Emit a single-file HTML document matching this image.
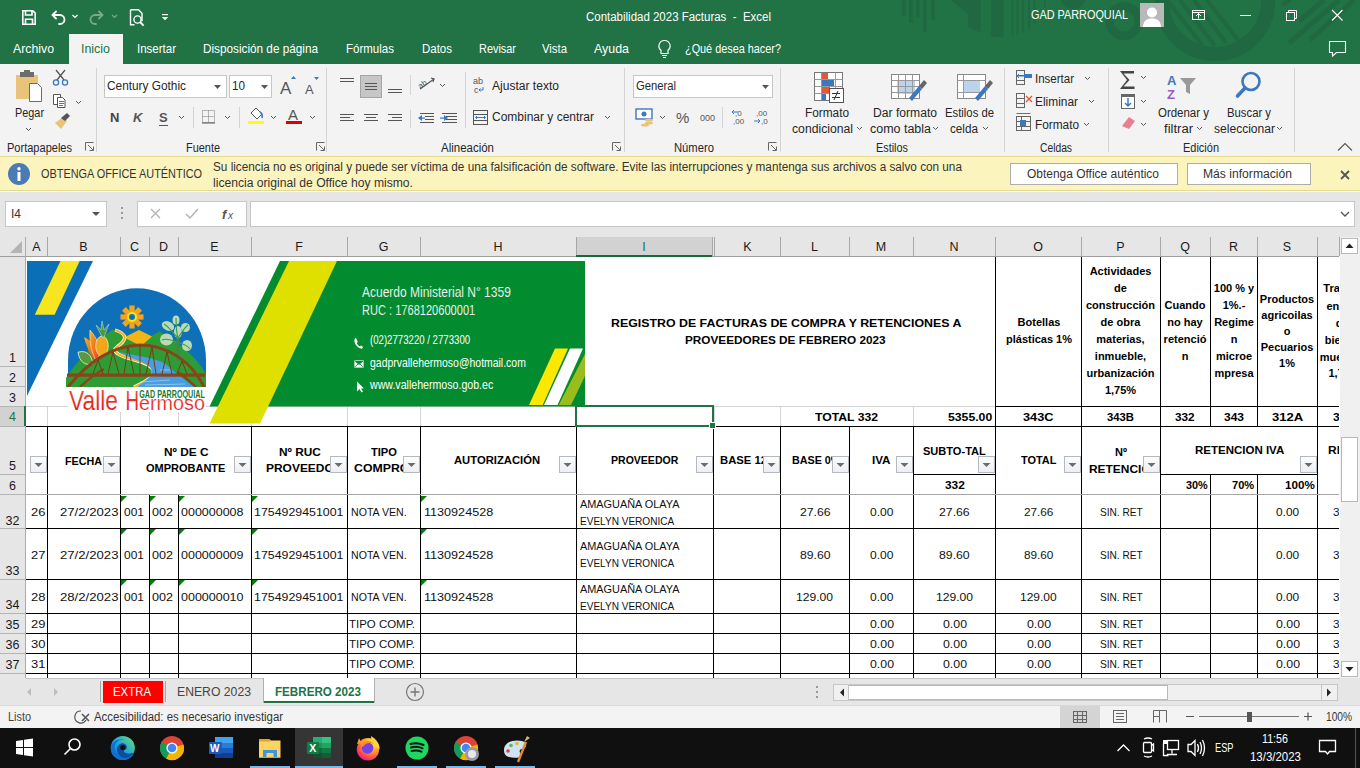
<!DOCTYPE html><html><head><meta charset="utf-8"><style>
html,body{margin:0;padding:0;width:1360px;height:768px;overflow:hidden;background:#fff}
body{position:relative;font-family:"Liberation Sans",sans-serif}
.t{position:absolute;white-space:pre;transform-origin:0 0}
.r{position:absolute}
.s{position:absolute;overflow:visible}
svg text{font-family:"Liberation Sans",sans-serif}
</style></head><body>
<div class="r" style="left:0px;top:0px;width:1360px;height:64px;background:#217346;"></div>
<svg class="s" style="left:880px;top:0px;" width="480" height="64" viewBox="0 0 480 64">
<g fill="#1f6841">
<rect x="22" y="0" width="3.6" height="16"/><rect x="29" y="0" width="3.6" height="23"/><rect x="36" y="0" width="3.6" height="17"/><rect x="43" y="0" width="3.8" height="32"/><rect x="51" y="0" width="3.8" height="20"/>
<path d="M70.6 0 L100.6 0 L100.6 32.6 L88 27 L88 14z"/>
<path d="M111 0 h12.5 v37 h-12.5z"/>
<rect x="131.5" y="0" width="1.8" height="35.5"/><rect x="136.5" y="0" width="1.8" height="34.5"/><rect x="142" y="0" width="1.8" height="32.6"/><rect x="148" y="0" width="1.8" height="29"/><rect x="153.5" y="0" width="1.8" height="24.7"/><rect x="164" y="0" width="1.8" height="7"/>
<ellipse cx="193" cy="-4" rx="13" ry="13"/>
</g>
<circle cx="244" cy="21" r="14.7" fill="none" stroke="#1f6841" stroke-width="8.5"/>
<circle cx="335" cy="1" r="53" fill="none" stroke="#1f6841" stroke-width="14"/>
<g stroke="#1f6841" stroke-width="4">
<path d="M287 0 L323 46"/><path d="M300 0 L335 46"/><path d="M314 0 L346 43"/><path d="M327 0 L358 40"/>
</g>
<g stroke="#1f6841" stroke-width="5">
<path d="M409 43 L459 0"/><path d="M430 40 L474 0"/><path d="M403 5 L410 -1"/><path d="M419 21 L444 0"/>
</g>
</svg>
<svg class="s" style="left:20px;top:6px;" width="160" height="24" viewBox="0 0 160 24">
<g fill="none" stroke="#fff" stroke-width="1.6">
<path d="M2.8 4.8 h10 l2.4 2.4 v11 h-12.4z"/>
<path d="M5.5 4.8 v4.2 h6.5 v-4.2"/><path d="M5.5 18.2 v-5 h7 v5"/>
</g>
<g fill="none" stroke="#fff" stroke-width="1.8" stroke-linecap="round">
<path d="M33 9 h7 a4.5 4.5 0 0 1 0 9 h-1"/><path d="M36 5.5 l-3.5 3.5 3.5 3.5"/>
</g>
<path d="M52.5 9 l2.5 2.5 2.5-2.5" fill="none" stroke="#fff" stroke-width="1.2"/>
<g fill="none" stroke="#79a98c" stroke-width="1.8" stroke-linecap="round">
<path d="M82 9 h-7 a4.5 4.5 0 0 0 0 9 h1"/><path d="M79 5.5 l3.5 3.5 -3.5 3.5"/>
</g>
<path d="M92 9 l2.5 2.5 2.5-2.5" fill="none" stroke="#79a98c" stroke-width="1.2"/>
<g fill="none" stroke="#fff" stroke-width="1.4">
<path d="M110.5 3.8 h8 l3.5 3.5 v8"/><path d="M110.5 3.8 v15 h4"/>
<circle cx="117.5" cy="13.5" r="3.6"/><path d="M120 16 l3.6 3.6" stroke-width="2"/>
</g>
<g fill="#fff"><rect x="142" y="8" width="6" height="1.2"/><path d="M141.8 11 h6.4 l-3.2 3.2z"/></g>
</svg>
<div class="t" style="left:586.00px;top:9.11px;font-size:12.5px;line-height:16px;color:#fff;font-weight:400;transform:scaleX(0.9181);">Contabilidad 2023 Facturas  -  Excel</div>
<div class="t" style="left:1031.00px;top:8.10px;font-size:12px;line-height:15px;color:#fff;font-weight:400;transform:scaleX(0.9054);">GAD PARROQUIAL</div>
<svg class="s" style="left:1140px;top:3px;" width="24" height="24" viewBox="0 0 24 24"><rect width="24" height="24" fill="#b9b9b9"/><circle cx="12" cy="9.5" r="5" fill="#fff"/><path d="M3 24 c0-6 4-8.5 9-8.5 s9 2.5 9 8.5z" fill="#fff"/></svg>
<svg class="s" style="left:1188px;top:6px;" width="160" height="22" viewBox="0 0 160 22">
<g fill="none" stroke="#fff" stroke-width="1">
<rect x="4.5" y="4.5" width="12" height="9"/><path d="M4.5 6.5 h12"/><path d="M10.5 12.5 v-5 M8 10 l2.5-2.5 2.5 2.5"/>
<path d="M52 9.5 h11"/>
<rect x="98.5" y="6.5" width="8" height="8"/><path d="M100.5 6.5 v-2 h8 v8 h-2"/>
<path d="M144 4 l10.5 10.5 M154.5 4 l-10.5 10.5" stroke-width="1.1"/>
</g></svg>
<div class="r" style="left:69px;top:34px;width:54px;height:30px;background:#f3f3f3;"></div>
<div class="t" style="left:13.00px;top:41.11px;font-size:13px;line-height:16px;color:#fff;font-weight:400;transform:scaleX(0.9457);">Archivo</div>
<div class="t" style="left:81.00px;top:41.11px;font-size:13px;line-height:16px;color:#217346;font-weight:400;transform:scaleX(0.9554);">Inicio</div>
<div class="t" style="left:137.00px;top:41.11px;font-size:13px;line-height:16px;color:#fff;font-weight:400;transform:scaleX(0.8850);">Insertar</div>
<div class="t" style="left:203.00px;top:41.11px;font-size:13px;line-height:16px;color:#fff;font-weight:400;transform:scaleX(0.9041);">Disposición de página</div>
<div class="t" style="left:346.00px;top:41.11px;font-size:13px;line-height:16px;color:#fff;font-weight:400;transform:scaleX(0.8860);">Fórmulas</div>
<div class="t" style="left:422.00px;top:41.11px;font-size:13px;line-height:16px;color:#fff;font-weight:400;transform:scaleX(0.8833);">Datos</div>
<div class="t" style="left:479.00px;top:41.11px;font-size:13px;line-height:16px;color:#fff;font-weight:400;transform:scaleX(0.8396);">Revisar</div>
<div class="t" style="left:542.00px;top:41.11px;font-size:13px;line-height:16px;color:#fff;font-weight:400;transform:scaleX(0.8712);">Vista</div>
<div class="t" style="left:594.00px;top:41.11px;font-size:13px;line-height:16px;color:#fff;font-weight:400;transform:scaleX(0.9547);">Ayuda</div>
<div class="t" style="left:685.00px;top:41.11px;font-size:13px;line-height:16px;color:#fff;font-weight:400;transform:scaleX(0.8354);">¿Qué desea hacer?</div>
<svg class="s" style="left:655px;top:38px;" width="20" height="22" viewBox="0 0 20 22"><g fill="none" stroke="#fff" stroke-width="1.2"><path d="M9.5 2.5 a5.5 5.5 0 0 1 3.5 9.8 v3.2 h-7 v-3.2 a5.5 5.5 0 0 1 3.5-9.8z"/><path d="M7 17.5 h5 M8 19.5 h3"/></g></svg>
<svg class="s" style="left:1326px;top:38px;" width="24" height="20" viewBox="0 0 24 20"><path d="M3.5 3.5 h16 v11 h-9 l-4 3.5 v-3.5 h-3z" fill="none" stroke="#fff" stroke-width="1.1"/></svg>
<div class="r" style="left:0px;top:64px;width:1360px;height:93px;background:#f3f3f3;"></div>
<div class="r" style="left:96px;top:68px;width:1px;height:84px;background:#d4d4d4;"></div>
<div class="r" style="left:326px;top:68px;width:1px;height:84px;background:#d4d4d4;"></div>
<div class="r" style="left:624px;top:68px;width:1px;height:84px;background:#d4d4d4;"></div>
<div class="r" style="left:780px;top:68px;width:1px;height:84px;background:#d4d4d4;"></div>
<div class="r" style="left:1004px;top:68px;width:1px;height:84px;background:#d4d4d4;"></div>
<div class="r" style="left:1108px;top:68px;width:1px;height:84px;background:#d4d4d4;"></div>
<div class="r" style="left:1294px;top:68px;width:1px;height:84px;background:#d4d4d4;"></div>
<div class="t" style="left:7.00px;top:140.90px;font-size:12px;line-height:15px;color:#262626;font-weight:400;transform:scaleX(0.9192);">Portapapeles</div>
<div class="t" style="left:186.00px;top:140.90px;font-size:12px;line-height:15px;color:#262626;font-weight:400;transform:scaleX(0.9103);">Fuente</div>
<div class="t" style="left:441.00px;top:140.90px;font-size:12px;line-height:15px;color:#262626;font-weight:400;transform:scaleX(0.9570);">Alineación</div>
<div class="t" style="left:674.00px;top:140.90px;font-size:12px;line-height:15px;color:#262626;font-weight:400;transform:scaleX(0.9370);">Número</div>
<div class="t" style="left:876.00px;top:140.90px;font-size:12px;line-height:15px;color:#262626;font-weight:400;transform:scaleX(0.9055);">Estilos</div>
<div class="t" style="left:1040.00px;top:140.90px;font-size:12px;line-height:15px;color:#262626;font-weight:400;transform:scaleX(0.8568);">Celdas</div>
<div class="t" style="left:1183.00px;top:140.90px;font-size:12px;line-height:15px;color:#262626;font-weight:400;transform:scaleX(0.9146);">Edición</div>
<svg class="s" style="left:85px;top:142px;" width="9" height="9" viewBox="0 0 9 9"><g fill="none" stroke="#666" stroke-width="1"><path d="M0.5 8.5 v-8 h8"/><path d="M3 3 l5 5 M8.5 4.5 v4 h-4"/></g></svg>
<svg class="s" style="left:316px;top:142px;" width="9" height="9" viewBox="0 0 9 9"><g fill="none" stroke="#666" stroke-width="1"><path d="M0.5 8.5 v-8 h8"/><path d="M3 3 l5 5 M8.5 4.5 v4 h-4"/></g></svg>
<svg class="s" style="left:612px;top:142px;" width="9" height="9" viewBox="0 0 9 9"><g fill="none" stroke="#666" stroke-width="1"><path d="M0.5 8.5 v-8 h8"/><path d="M3 3 l5 5 M8.5 4.5 v4 h-4"/></g></svg>
<svg class="s" style="left:768px;top:142px;" width="9" height="9" viewBox="0 0 9 9"><g fill="none" stroke="#666" stroke-width="1"><path d="M0.5 8.5 v-8 h8"/><path d="M3 3 l5 5 M8.5 4.5 v4 h-4"/></g></svg>
<svg class="s" style="left:1336px;top:141px;" width="18" height="12" viewBox="0 0 18 12"><path d="M2 9.5 l7-7 7 7" fill="none" stroke="#555" stroke-width="1.1"/></svg>
<svg class="s" style="left:10px;top:66px;" width="80" height="70" viewBox="0 0 80 70">
<path d="M6 9 h22 v24 h-22z" fill="#eac37b"/>
<rect x="10" y="6" width="14" height="5" fill="#6c6c6c"/><rect x="14" y="4" width="6" height="3" fill="#6c6c6c"/>
<path d="M19.5 17.5 h8 l4 4 v14 h-12z" fill="#fff" stroke="#6c6c6c" stroke-width="1"/>
<g fill="none" stroke="#3b78c1" stroke-width="1.3"><circle cx="46" cy="16.5" r="2.6"/><circle cx="55" cy="16.5" r="2.6"/></g>
<path d="M47 14 l8-10 M54 14 l-8-10" stroke="#555" stroke-width="1.3"/>
<g fill="#fff" stroke="#555" stroke-width="1"><path d="M43.5 28.5 h7 v10 h-7z"/><path d="M47.5 31.5 h5 l2.5 2.5 v7.5 h-7.5z"/></g>
<g stroke="#3b78c1"><path d="M49 35.5 h5 M49 37.5 h5 M49 39.5 h4"/></g>
<path d="M66 35 l2.5 2.5 2.5-2.5" fill="none" stroke="#555" stroke-width="1"/>
<path d="M45 57 l8-6 4 4 -6 8z" fill="#eac37b"/><path d="M51 52 l6-5 3 3 -5 5z" fill="#555"/>
<path d="M16 62 l2.5 2.5 2.5-2.5" fill="none" stroke="#555" stroke-width="1"/>
</svg>
<div class="t" style="left:14.50px;top:106.10px;font-size:12px;line-height:15px;color:#262626;font-weight:400;transform:scaleX(0.9060);">Pegar</div>
<div class="r" style="left:104px;top:75px;width:123px;height:23px;background:#fff;border:1px solid #c6c6c6;box-sizing:border-box"></div>
<div class="r" style="left:229px;top:75px;width:43px;height:23px;background:#fff;border:1px solid #c6c6c6;box-sizing:border-box"></div>
<div class="t" style="left:107.00px;top:79.10px;font-size:12px;line-height:15px;color:#262626;font-weight:400;transform:scaleX(0.9870);">Century Gothic</div>
<div class="t" style="left:232.00px;top:79.10px;font-size:12px;line-height:15px;color:#262626;font-weight:400;transform:scaleX(0.9738);">10</div>
<svg class="s" style="left:210px;top:82px;" width="60" height="10" viewBox="0 0 60 10"><path d="M4 3 h7 l-3.5 4z M51 3 h7 l-3.5 4z" fill="#555"/></svg>
<svg class="s" style="left:278px;top:74px;" width="44" height="24" viewBox="0 0 44 24">
<text x="2" y="20" font-family="Liberation Sans" font-size="17" fill="#555">A</text><path d="M13 5 h5 l-2.5-3z" fill="#3b78c1"/>
<text x="27" y="20" font-family="Liberation Sans" font-size="13" fill="#555">A</text><path d="M36 3 h5 l-2.5 3z" fill="#3b78c1"/>
</svg>
<svg class="s" style="left:104px;top:104px;" width="222" height="28" viewBox="0 0 222 28">
<text x="6" y="18" font-family="Liberation Sans" font-weight="700" font-size="13" fill="#444">N</text>
<text x="29" y="18" font-family="Liberation Sans" font-weight="700" font-style="italic" font-size="13" fill="#555">K</text>
<text x="55" y="18" font-family="Liberation Sans" font-weight="700" font-size="13" fill="#555">S</text><rect x="55" y="21" width="9" height="1" fill="#555"/>
<path d="M75 12 l2.5 2.5 2.5-2.5" fill="none" stroke="#555"/>
<rect x="89" y="3" width="1" height="21" fill="#d4d4d4"/>
<g fill="none" stroke="#777" stroke-width="1" stroke-dasharray="1 1"><rect x="98.5" y="6.5" width="12" height="12"/><path d="M104.5 6.5 v12 M98.5 12.5 h12"/></g><path d="M98 19 h13" stroke="#555"/>
<path d="M121 12 l2.5 2.5 2.5-2.5" fill="none" stroke="#555"/>
<rect x="135" y="3" width="1" height="21" fill="#d4d4d4"/>
<path d="M147 9 l5-5 6 6 -5 5z" fill="#fff" stroke="#555"/><path d="M156 8 q3 2 2 6" fill="none" stroke="#3b78c1" stroke-width="1.6"/>
<rect x="144" y="17" width="16" height="3" fill="#ffff00"/>
<path d="M167 12 l2.5 2.5 2.5-2.5" fill="none" stroke="#555"/>
<text x="184" y="16" font-family="Liberation Sans" font-size="15" fill="#555">A</text>
<rect x="182" y="17" width="16" height="3" fill="#e00000"/>
<path d="M206 12 l2.5 2.5 2.5-2.5" fill="none" stroke="#555"/>
</svg>
<div class="r" style="left:360px;top:75px;width:22px;height:23px;background:#c6c6c6;border:1px solid #a5a5a5;box-sizing:border-box"></div>
<svg class="s" style="left:336px;top:72px;" width="290" height="60" viewBox="0 0 290 60">
<g stroke="#555" stroke-width="1">
<path d="M4 6.5 h14 M4 9.5 h14"/>
<path d="M29 11.5 h12 M29 14.5 h12 M29 17.5 h12"/>
<path d="M52 17.5 h14 M52 20.5 h14"/>
<path d="M4 42.5 h14 M4 45.5 h10 M4 48.5 h14"/>
<path d="M28 42.5 h14 M30 45.5 h10 M28 48.5 h14"/>
<path d="M52 42.5 h14 M56 45.5 h10 M52 48.5 h14"/>
<path d="M84 41.5 h14 M89 44.5 h9 M89 47.5 h9 M84 50.5 h14"/>
<path d="M106 41.5 h15 M110 44.5 h11 M110 47.5 h11 M106 50.5 h15"/>
</g>
<g fill="#3b78c1"><path d="M82 46 l4-3 v6z"/><rect x="85" y="45.5" width="4" height="1.2"/><path d="M112 46 l-4-3 v6z"/><rect x="104" y="45.5" width="4" height="1.2"/></g>
<rect x="74" y="3" width="1" height="20" fill="#d4d4d4"/><rect x="74" y="38" width="1" height="18" fill="#d4d4d4"/>
<rect x="129" y="0" width="1" height="56" fill="#d4d4d4"/>
<g fill="none" stroke="#555" stroke-width="1.2"><path d="M84 17 l14-10"/><path d="M95 6 l3 1 -1 3"/></g>
<text x="82" y="14" font-family="Liberation Sans" font-size="8" fill="#555" transform="rotate(-35 88 12)">ab</text>
<path d="M104 12 l2.5 2.5 2.5-2.5" fill="none" stroke="#555"/>
<text x="137" y="12" font-family="Liberation Sans" font-size="9" fill="#555">ab</text><text x="138" y="21" font-family="Liberation Sans" font-size="9" fill="#555">c</text>
<path d="M147 15 v3 h-4 M144.5 16.5 l-1.5 1.5 1.5 1.5" fill="none" stroke="#3b78c1"/>
<g fill="none" stroke="#555"><rect x="137.5" y="38.5" width="14" height="14"/><path d="M137.5 42.5 h14 M137.5 48.5 h14"/></g>
<path d="M140 45.5 h9" stroke="#3b78c1"/><path d="M141 44 l-1.5 1.5 1.5 1.5 M148 44 l1.5 1.5 -1.5 1.5" fill="none" stroke="#3b78c1"/>
<path d="M269 44 l2.5 2.5 2.5-2.5" fill="none" stroke="#555"/>
</svg>
<div class="t" style="left:492.00px;top:79.10px;font-size:12px;line-height:15px;color:#262626;font-weight:400;transform:scaleX(1.0046);">Ajustar texto</div>
<div class="t" style="left:492.00px;top:110.10px;font-size:12px;line-height:15px;color:#262626;font-weight:400;transform:scaleX(0.9997);">Combinar y centrar</div>
<div class="r" style="left:633px;top:75px;width:140px;height:23px;background:#fff;border:1px solid #c6c6c6;box-sizing:border-box"></div>
<div class="t" style="left:636.00px;top:79.10px;font-size:12px;line-height:15px;color:#262626;font-weight:400;transform:scaleX(0.9370);">General</div>
<svg class="s" style="left:630px;top:104px;" width="150" height="28" viewBox="0 0 150 28">
<path d="M761 10" />

<rect x="6" y="5" width="16" height="10" fill="#fff" stroke="#3b78c1" stroke-width="1.4"/><circle cx="14" cy="10" r="2.5" fill="#3b78c1"/>
<g fill="#eac37b"><ellipse cx="19" cy="16" rx="4" ry="1.6"/><ellipse cx="19" cy="19" rx="4" ry="1.6"/><ellipse cx="15" cy="21" rx="4" ry="1.6"/></g>
<path d="M30 12 l2.5 2.5 2.5-2.5" fill="none" stroke="#555"/>
<text x="46" y="19" font-family="Liberation Sans" font-size="15" fill="#555">%</text>
<text x="70" y="17" font-family="Liberation Sans" font-size="9" fill="#555">000</text>
<rect x="92" y="3" width="1" height="21" fill="#d4d4d4"/>
<text x="105" y="12" font-family="Liberation Sans" font-size="8" fill="#555">,0</text><text x="103" y="20" font-family="Liberation Sans" font-size="8" fill="#555">,00</text>
<path d="M108 8 h-6 M104 6 l-2 2 2 2" fill="none" stroke="#3b78c1"/>
<text x="126" y="12" font-family="Liberation Sans" font-size="8" fill="#555">,00</text><text x="131" y="20" font-family="Liberation Sans" font-size="8" fill="#555">,0</text>
<path d="M124 17 h6 M128 15 l2 2 -2 2" fill="none" stroke="#3b78c1"/>
</svg>
<svg class="s" style="left:760px;top:82px;" width="12" height="10" viewBox="0 0 12 10"><path d="M2 3 h7 l-3.5 4z" fill="#555"/></svg>
<svg class="s" style="left:805px;top:68px;" width="200" height="40" viewBox="0 0 200 40">
<g fill="#fff" stroke="#777"><rect x="9.5" y="4.5" width="28" height="28"/></g>
<g stroke="#999"><path d="M9.5 11.5 h28 M9.5 18.5 h28 M9.5 25.5 h28 M16.5 4.5 v28 M30.5 4.5 v28"/></g>
<rect x="17" y="5" width="6" height="6" fill="#e05a38"/><rect x="17" y="12" width="12" height="6" fill="#3b78c1"/><rect x="17" y="19" width="8" height="6" fill="#e05a38"/><rect x="17" y="26" width="4" height="6" fill="#3b78c1"/>
<rect x="24.5" y="20.5" width="14" height="14" fill="#fff" stroke="#555"/><path d="M27 25.5 h8 M27 29.5 h8 M33 23 l-4 9" stroke="#333"/>
<g fill="#fff" stroke="#888"><rect x="86.5" y="6.5" width="28" height="24"/></g>
<rect x="92" y="12" width="18" height="14" fill="#bcd3ee"/>
<g stroke="#999"><path d="M86.5 12.5 h28 M86.5 18.5 h28 M86.5 24.5 h28 M93.5 6.5 v24 M100.5 6.5 v24 M107.5 6.5 v24"/></g>
<path d="M104 30 l10-12 3 3 -10 12z" fill="#3b78c1"/><path d="M114 18 l5-6 3 3 -5 6z" fill="#666"/>
<g fill="#fff" stroke="#888"><rect x="152.5" y="6.5" width="28" height="24"/></g>
<rect x="159" y="12" width="16" height="12" fill="#bcd3ee"/>
<g stroke="#999"><path d="M152.5 12.5 h28 M152.5 24.5 h28 M158.5 6.5 v24"/></g>
<path d="M170 30 l10-12 3 3 -10 12z" fill="#3b78c1"/><path d="M180 18 l5-6 3 3 -5 6z" fill="#666"/>
</svg>
<div class="t" style="left:805.00px;top:105.60px;font-size:12px;line-height:15px;color:#262626;font-weight:400;transform:scaleX(0.9850);">Formato</div>
<div class="t" style="left:792.00px;top:121.60px;font-size:12px;line-height:15px;color:#262626;font-weight:400;transform:scaleX(1.0162);">condicional</div>
<div class="t" style="left:873.00px;top:105.60px;font-size:12px;line-height:15px;color:#262626;font-weight:400;transform:scaleX(1.0101);">Dar formato</div>
<div class="t" style="left:870.00px;top:121.60px;font-size:12px;line-height:15px;color:#262626;font-weight:400;transform:scaleX(1.0390);">como tabla</div>
<div class="t" style="left:945.00px;top:105.60px;font-size:12px;line-height:15px;color:#262626;font-weight:400;transform:scaleX(0.9419);">Estilos de</div>
<div class="t" style="left:950.00px;top:121.60px;font-size:12px;line-height:15px;color:#262626;font-weight:400;transform:scaleX(0.9753);">celda</div>
<svg class="s" style="left:855px;top:126px;" width="140" height="6" viewBox="0 0 140 6"><path d="M2 1 l2.5 2.5 2.5-2.5 M78 1 l2.5 2.5 2.5-2.5 M128 1 l2.5 2.5 2.5-2.5" fill="none" stroke="#555"/></svg>
<svg class="s" style="left:1012px;top:66px;" width="90" height="68" viewBox="0 0 90 68">
<g fill="none" stroke="#666"><rect x="4.5" y="4.5" width="8" height="14"/><path d="M4.5 9.5 h8 M4.5 14.5 h8"/></g>
<rect x="12" y="8" width="8" height="4" fill="#3b78c1"/><path d="M6 10 h6 M7 8 l-2 2 2 2" fill="none" stroke="#3b78c1"/>
<g fill="none" stroke="#666"><rect x="4.5" y="27.5" width="8" height="14"/><path d="M4.5 32.5 h8 M4.5 37.5 h8"/></g>
<path d="M14 30 l6 6 M20 30 l-6 6" stroke="#e05a38" stroke-width="1.4"/>
<g fill="none" stroke="#666"><rect x="4.5" y="50.5" width="14" height="14"/><path d="M4.5 55.5 h14 M4.5 60.5 h14 M9.5 50.5 v14"/></g>
<rect x="8" y="54" width="6" height="6" fill="#3b78c1"/><path d="M4.5 47.5 h14" stroke="#3b78c1"/>
<path d="M73 11 l2.5 2.5 2.5-2.5 M77 34 l2.5 2.5 2.5-2.5 M72 57 l2.5 2.5 2.5-2.5" fill="none" stroke="#555"/>
</svg>
<div class="t" style="left:1035.00px;top:71.60px;font-size:12px;line-height:15px;color:#262626;font-weight:400;transform:scaleX(0.9587);">Insertar</div>
<div class="t" style="left:1035.00px;top:94.60px;font-size:12px;line-height:15px;color:#262626;font-weight:400;transform:scaleX(0.9919);">Eliminar</div>
<div class="t" style="left:1035.00px;top:117.60px;font-size:12px;line-height:15px;color:#262626;font-weight:400;transform:scaleX(0.9850);">Formato</div>
<svg class="s" style="left:1114px;top:66px;" width="180" height="70" viewBox="0 0 180 70">
<path d="M6 5 h14 v2.5 h-10.5 l6 6.5 -6 6.5 h11 v2.5 h-14.5 l7-9z" fill="#444"/>
<path d="M27 10 l2.5 2.5 2.5-2.5" fill="none" stroke="#555"/>
<rect x="7.5" y="28.5" width="13" height="14" fill="#fff" stroke="#666"/><rect x="7" y="28" width="14" height="3" fill="#666"/>
<path d="M14 32 v8 M11 37 l3 3 3-3" fill="none" stroke="#3b78c1" stroke-width="1.5"/>
<path d="M27 34 l2.5 2.5 2.5-2.5" fill="none" stroke="#555"/>
<path d="M8 60 l7-9 6 4 -6 8z" fill="#e8808f"/>
<path d="M27 57 l2.5 2.5 2.5-2.5" fill="none" stroke="#555"/>
<text x="53" y="19" font-family="Liberation Sans" font-weight="700" font-size="13" fill="#3b78c1">A</text><text x="53" y="33" font-family="Liberation Sans" font-weight="700" font-size="13" fill="#9a5cc6">Z</text>
<path d="M66 12 h16 l-6 7 v9 l-4-2 v-7z" fill="#999"/>
<circle cx="137" cy="15.5" r="8.5" fill="none" stroke="#3b78c1" stroke-width="2.6"/><path d="M131 22 l-7.5 8" stroke="#3b78c1" stroke-width="3.6" stroke-linecap="round"/>
</svg>
<div class="t" style="left:1158.00px;top:105.60px;font-size:12px;line-height:15px;color:#262626;font-weight:400;transform:scaleX(0.9556);">Ordenar y</div>
<div class="t" style="left:1164.00px;top:121.60px;font-size:12px;line-height:15px;color:#262626;font-weight:400;transform:scaleX(1.0874);">filtrar</div>
<div class="t" style="left:1227.00px;top:105.60px;font-size:12px;line-height:15px;color:#262626;font-weight:400;transform:scaleX(0.9426);">Buscar y</div>
<div class="t" style="left:1214.00px;top:121.60px;font-size:12px;line-height:15px;color:#262626;font-weight:400;transform:scaleX(1.0051);">seleccionar</div>
<svg class="s" style="left:1195px;top:126px;" width="90" height="6" viewBox="0 0 90 6"><path d="M2 1 l2.5 2.5 2.5-2.5 M82 1 l2.5 2.5 2.5-2.5" fill="none" stroke="#555"/></svg>
<div class="r" style="left:0px;top:156px;width:1360px;height:35px;background:#fcf4bd;border-top:1px solid #e4d98e;border-bottom:1px solid #e4d98e;box-sizing:border-box"></div>
<svg class="s" style="left:8px;top:163px;" width="24" height="24" viewBox="0 0 24 24"><circle cx="11" cy="11" r="11" fill="#4a7bb5"/><rect x="9.5" y="9" width="3" height="9" fill="#fff"/><circle cx="11" cy="5.8" r="1.7" fill="#fff"/></svg>
<div class="t" style="left:41.00px;top:167.10px;font-size:12px;line-height:15px;color:#333;font-weight:400;transform:scaleX(0.9078);">OBTENGA OFFICE AUTÉNTICO</div>
<div class="t" style="left:213.00px;top:159.60px;font-size:12px;line-height:15px;color:#333;font-weight:400;transform:scaleX(0.9789);">Su licencia no es original y puede ser víctima de una falsificación de software. Evite las interrupciones y mantenga sus archivos a salvo con una</div>
<div class="t" style="left:213.00px;top:175.60px;font-size:12px;line-height:15px;color:#333;font-weight:400;transform:scaleX(1.0107);">licencia original de Office hoy mismo.</div>
<div class="r" style="left:1010px;top:163px;width:168px;height:22px;background:#fff;border:1px solid #adadad;box-sizing:border-box"></div>
<div class="r" style="left:1187px;top:163px;width:124px;height:22px;background:#fff;border:1px solid #adadad;box-sizing:border-box"></div>
<div class="t" style="left:1027.00px;top:167.10px;font-size:12px;line-height:15px;color:#333;font-weight:400;transform:scaleX(0.9959);">Obtenga Office auténtico</div>
<div class="t" style="left:1203.00px;top:167.10px;font-size:12px;line-height:15px;color:#333;font-weight:400;transform:scaleX(1.0111);">Más información</div>
<svg class="s" style="left:1338px;top:168px;" width="14" height="14" viewBox="0 0 14 14"><path d="M3 3 l8 8 M11 3 l-8 8" stroke="#555" stroke-width="1.8"/></svg>
<div class="r" style="left:0px;top:192px;width:1360px;height:46px;background:#e6e6e6;"></div>
<div class="r" style="left:5px;top:201px;width:102px;height:26px;background:#fff;border:1px solid #c6c6c6;box-sizing:border-box"></div>
<div class="t" style="left:11.00px;top:206.60px;font-size:12px;line-height:15px;color:#333;font-weight:400;transform:scaleX(0.9980);">I4</div>
<svg class="s" style="left:90px;top:209px;" width="14" height="10" viewBox="0 0 14 10"><path d="M2 3 h8 l-4 4z" fill="#555"/></svg>
<svg class="s" style="left:118px;top:204px;" width="8" height="20" viewBox="0 0 8 20"><g fill="#999"><rect x="3" y="3" width="2" height="2"/><rect x="3" y="8" width="2" height="2"/><rect x="3" y="13" width="2" height="2"/></g></svg>
<div class="r" style="left:137px;top:201px;width:110px;height:26px;background:#fff;border:1px solid #c6c6c6;box-sizing:border-box"></div>
<svg class="s" style="left:140px;top:204px;" width="104" height="20" viewBox="0 0 104 20">
<path d="M11 5 l9 9 M20 5 l-9 9" stroke="#b3b3b3" stroke-width="1.3"/>
<path d="M46 10 l4 4 8-9" fill="none" stroke="#b3b3b3" stroke-width="1.5"/>
<text x="82" y="15" font-family="Liberation Serif" font-style="italic" font-weight="700" font-size="13" fill="#555">f</text><text x="88" y="15" font-family="Liberation Serif" font-style="italic" font-size="10" fill="#555">x</text>
</svg>
<div class="r" style="left:250px;top:201px;width:1105px;height:26px;background:#fff;border:1px solid #c6c6c6;box-sizing:border-box"></div>
<svg class="s" style="left:1338px;top:207px;" width="14" height="14" viewBox="0 0 14 14"><path d="M3 5 l4 4 4-4" fill="none" stroke="#555" stroke-width="1.3"/></svg>
<div class="r" style="left:0px;top:237px;width:1340px;height:19px;background:#e6e6e6;"></div>
<div class="r" style="left:0px;top:256px;width:26px;height:422px;background:#e6e6e6;"></div>
<div class="r" style="left:26px;top:256px;width:1313px;height:422px;background:#fff;"></div>
<div class="r" style="left:576px;top:237px;width:136px;height:19px;background:#d2d2d2;"></div>
<div class="r" style="left:0px;top:406px;width:26px;height:20px;background:#d2d2d2;"></div>
<svg class="s" style="left:0;top:0" width="1360" height="680"><rect x="47" y="237" width="1" height="19" fill="#a8a8a8"/><rect x="120" y="237" width="1" height="19" fill="#a8a8a8"/><rect x="149" y="237" width="1" height="19" fill="#a8a8a8"/><rect x="178" y="237" width="1" height="19" fill="#a8a8a8"/><rect x="251" y="237" width="1" height="19" fill="#a8a8a8"/><rect x="347" y="237" width="1" height="19" fill="#a8a8a8"/><rect x="420" y="237" width="1" height="19" fill="#a8a8a8"/><rect x="576" y="237" width="1" height="19" fill="#a8a8a8"/><rect x="712" y="237" width="1" height="19" fill="#a8a8a8"/><rect x="780" y="237" width="1" height="19" fill="#a8a8a8"/><rect x="849" y="237" width="1" height="19" fill="#a8a8a8"/><rect x="913" y="237" width="1" height="19" fill="#a8a8a8"/><rect x="995" y="237" width="1" height="19" fill="#a8a8a8"/><rect x="1081" y="237" width="1" height="19" fill="#a8a8a8"/><rect x="1160" y="237" width="1" height="19" fill="#a8a8a8"/><rect x="1210" y="237" width="1" height="19" fill="#a8a8a8"/><rect x="1257" y="237" width="1" height="19" fill="#a8a8a8"/><rect x="1317" y="237" width="1" height="19" fill="#a8a8a8"/><rect x="1339" y="237" width="1" height="19" fill="#a8a8a8"/><rect x="712" y="237" width="3" height="19" fill="#a8a8a8"/><rect x="713" y="237" width="1" height="19" fill="#e6e6e6"/><rect x="0" y="256" width="1340" height="1" fill="#9e9e9e"/><rect x="25" y="237" width="1" height="441" fill="#ababab"/><rect x="0" y="366" width="25" height="1" fill="#b4b4b4"/><rect x="0" y="386" width="25" height="1" fill="#b4b4b4"/><rect x="0" y="406" width="25" height="1" fill="#b4b4b4"/><rect x="0" y="426" width="25" height="1" fill="#b4b4b4"/><rect x="0" y="474" width="25" height="1" fill="#b4b4b4"/><rect x="0" y="494" width="25" height="1" fill="#b4b4b4"/><rect x="0" y="528" width="25" height="1" fill="#b4b4b4"/><rect x="0" y="579" width="25" height="1" fill="#b4b4b4"/><rect x="0" y="613" width="25" height="1" fill="#b4b4b4"/><rect x="0" y="633" width="25" height="1" fill="#b4b4b4"/><rect x="0" y="653" width="25" height="1" fill="#b4b4b4"/><rect x="0" y="673" width="25" height="1" fill="#b4b4b4"/><rect x="0" y="678" width="25" height="1" fill="#b4b4b4"/><path d="M10 253 L22 253 L22 241z" fill="#b4b4b4"/><rect x="47" y="257" width="1" height="169" fill="#d4d4d4"/><rect x="120" y="257" width="1" height="169" fill="#d4d4d4"/><rect x="149" y="257" width="1" height="169" fill="#d4d4d4"/><rect x="178" y="257" width="1" height="169" fill="#d4d4d4"/><rect x="251" y="257" width="1" height="169" fill="#d4d4d4"/><rect x="347" y="257" width="1" height="169" fill="#d4d4d4"/><rect x="420" y="257" width="1" height="169" fill="#d4d4d4"/><rect x="576" y="257" width="1" height="169" fill="#d4d4d4"/><rect x="26" y="366" width="550" height="1" fill="#d4d4d4"/><rect x="26" y="386" width="550" height="1" fill="#d4d4d4"/><rect x="26" y="406" width="550" height="1" fill="#d4d4d4"/><rect x="576" y="406" width="419" height="1" fill="#d4d4d4"/><rect x="712" y="406" width="3" height="20" fill="#d4d4d4"/><rect x="780" y="406" width="1" height="20" fill="#d4d4d4"/><rect x="913" y="406" width="1" height="20" fill="#d4d4d4"/><rect x="995" y="257" width="1" height="237" fill="#000"/><rect x="1081" y="257" width="1" height="237" fill="#000"/><rect x="1160" y="257" width="1" height="237" fill="#000"/><rect x="1210" y="257" width="1" height="237" fill="#000"/><rect x="1257" y="257" width="1" height="237" fill="#000"/><rect x="1317" y="257" width="1" height="237" fill="#000"/><rect x="995" y="406" width="344" height="1" fill="#000"/><rect x="26" y="426" width="1313" height="1" fill="#000"/><rect x="47" y="426" width="1" height="68" fill="#000"/><rect x="120" y="426" width="1" height="68" fill="#000"/><rect x="251" y="426" width="1" height="68" fill="#000"/><rect x="347" y="426" width="1" height="68" fill="#000"/><rect x="420" y="426" width="1" height="68" fill="#000"/><rect x="576" y="426" width="1" height="68" fill="#000"/><rect x="713" y="426" width="1" height="68" fill="#000"/><rect x="780" y="426" width="1" height="68" fill="#000"/><rect x="849" y="426" width="1" height="68" fill="#000"/><rect x="913" y="426" width="1" height="68" fill="#000"/><rect x="913" y="474" width="82" height="1" fill="#000"/><rect x="1160" y="474" width="157" height="1" fill="#000"/><rect x="26" y="494" width="1313" height="1" fill="#a6a6a6"/><rect x="26" y="528" width="1313" height="1" fill="#000"/><rect x="26" y="579" width="1313" height="1" fill="#000"/><rect x="26" y="613" width="1313" height="1" fill="#000"/><rect x="26" y="633" width="1313" height="1" fill="#000"/><rect x="26" y="653" width="1313" height="1" fill="#000"/><rect x="26" y="673" width="1313" height="1" fill="#000"/><rect x="26" y="678" width="1313" height="1" fill="#000"/><rect x="47" y="495" width="1" height="183" fill="#000"/><rect x="120" y="495" width="1" height="183" fill="#000"/><rect x="149" y="495" width="1" height="183" fill="#000"/><rect x="178" y="495" width="1" height="183" fill="#000"/><rect x="251" y="495" width="1" height="183" fill="#000"/><rect x="347" y="495" width="1" height="183" fill="#000"/><rect x="420" y="495" width="1" height="183" fill="#000"/><rect x="576" y="495" width="1" height="183" fill="#000"/><rect x="713" y="495" width="1" height="183" fill="#000"/><rect x="780" y="495" width="1" height="183" fill="#000"/><rect x="849" y="495" width="1" height="183" fill="#000"/><rect x="913" y="495" width="1" height="183" fill="#000"/><rect x="995" y="495" width="1" height="183" fill="#000"/><rect x="1081" y="495" width="1" height="183" fill="#000"/><rect x="1160" y="495" width="1" height="183" fill="#000"/><rect x="1210" y="495" width="1" height="183" fill="#000"/><rect x="1257" y="495" width="1" height="183" fill="#000"/><rect x="1317" y="495" width="1" height="183" fill="#000"/></svg>
<div class="r" style="left:1210px;top:427px;width:1px;height:47px;background:#fff;"></div>
<div class="r" style="left:1257px;top:427px;width:1px;height:47px;background:#fff;"></div>
<div class="t" style="left:32.33px;top:238.61px;font-size:12.5px;line-height:16px;color:#1a1a1a;font-weight:400;transform:scaleX(1.0000);">A</div>
<div class="t" style="left:79.33px;top:238.61px;font-size:12.5px;line-height:16px;color:#1a1a1a;font-weight:400;transform:scaleX(1.0000);">B</div>
<div class="t" style="left:129.98px;top:238.61px;font-size:12.5px;line-height:16px;color:#1a1a1a;font-weight:400;transform:scaleX(1.0000);">C</div>
<div class="t" style="left:158.98px;top:238.61px;font-size:12.5px;line-height:16px;color:#1a1a1a;font-weight:400;transform:scaleX(1.0000);">D</div>
<div class="t" style="left:210.33px;top:238.61px;font-size:12.5px;line-height:16px;color:#1a1a1a;font-weight:400;transform:scaleX(1.0000);">E</div>
<div class="t" style="left:295.19px;top:238.61px;font-size:12.5px;line-height:16px;color:#1a1a1a;font-weight:400;transform:scaleX(1.0000);">F</div>
<div class="t" style="left:378.64px;top:238.61px;font-size:12.5px;line-height:16px;color:#1a1a1a;font-weight:400;transform:scaleX(1.0000);">G</div>
<div class="t" style="left:493.48px;top:238.61px;font-size:12.5px;line-height:16px;color:#1a1a1a;font-weight:400;transform:scaleX(1.0000);">H</div>
<div class="t" style="left:642.27px;top:238.61px;font-size:12.5px;line-height:16px;color:#217346;font-weight:400;transform:scaleX(1.0000);">I</div>
<div class="t" style="left:743.33px;top:238.61px;font-size:12.5px;line-height:16px;color:#1a1a1a;font-weight:400;transform:scaleX(1.0000);">K</div>
<div class="t" style="left:811.03px;top:238.61px;font-size:12.5px;line-height:16px;color:#1a1a1a;font-weight:400;transform:scaleX(1.0000);">L</div>
<div class="t" style="left:875.80px;top:238.61px;font-size:12.5px;line-height:16px;color:#1a1a1a;font-weight:400;transform:scaleX(1.0000);">M</div>
<div class="t" style="left:949.48px;top:238.61px;font-size:12.5px;line-height:16px;color:#1a1a1a;font-weight:400;transform:scaleX(1.0000);">N</div>
<div class="t" style="left:1033.14px;top:238.61px;font-size:12.5px;line-height:16px;color:#1a1a1a;font-weight:400;transform:scaleX(1.0000);">O</div>
<div class="t" style="left:1116.33px;top:238.61px;font-size:12.5px;line-height:16px;color:#1a1a1a;font-weight:400;transform:scaleX(1.0000);">P</div>
<div class="t" style="left:1180.14px;top:238.61px;font-size:12.5px;line-height:16px;color:#1a1a1a;font-weight:400;transform:scaleX(1.0000);">Q</div>
<div class="t" style="left:1228.98px;top:238.61px;font-size:12.5px;line-height:16px;color:#1a1a1a;font-weight:400;transform:scaleX(1.0000);">R</div>
<div class="t" style="left:1282.83px;top:238.61px;font-size:12.5px;line-height:16px;color:#1a1a1a;font-weight:400;transform:scaleX(1.0000);">S</div>
<div class="r" style="left:576px;top:255px;width:136px;height:2px;background:#136b3a;"></div>
<div class="r" style="left:24px;top:406px;width:2px;height:20px;background:#217346;"></div>
<div class="t" style="left:9.03px;top:349.91px;font-size:12.5px;line-height:16px;color:#1a1a1a;font-weight:400;transform:scaleX(1.0000);">1</div>
<div class="t" style="left:9.03px;top:369.91px;font-size:12.5px;line-height:16px;color:#1a1a1a;font-weight:400;transform:scaleX(1.0000);">2</div>
<div class="t" style="left:9.03px;top:389.91px;font-size:12.5px;line-height:16px;color:#1a1a1a;font-weight:400;transform:scaleX(1.0000);">3</div>
<div class="t" style="left:9.03px;top:409.41px;font-size:12.5px;line-height:16px;color:#217346;font-weight:400;transform:scaleX(1.0000);">4</div>
<div class="t" style="left:9.03px;top:457.91px;font-size:12.5px;line-height:16px;color:#1a1a1a;font-weight:400;transform:scaleX(1.0000);">5</div>
<div class="t" style="left:9.03px;top:477.91px;font-size:12.5px;line-height:16px;color:#1a1a1a;font-weight:400;transform:scaleX(1.0000);">6</div>
<div class="t" style="left:5.55px;top:512.91px;font-size:12.5px;line-height:16px;color:#1a1a1a;font-weight:400;transform:scaleX(1.0000);">32</div>
<div class="t" style="left:5.55px;top:563.41px;font-size:12.5px;line-height:16px;color:#1a1a1a;font-weight:400;transform:scaleX(1.0000);">33</div>
<div class="t" style="left:5.55px;top:597.41px;font-size:12.5px;line-height:16px;color:#1a1a1a;font-weight:400;transform:scaleX(1.0000);">34</div>
<div class="t" style="left:5.55px;top:616.91px;font-size:12.5px;line-height:16px;color:#1a1a1a;font-weight:400;transform:scaleX(1.0000);">35</div>
<div class="t" style="left:5.55px;top:636.91px;font-size:12.5px;line-height:16px;color:#1a1a1a;font-weight:400;transform:scaleX(1.0000);">36</div>
<div class="t" style="left:5.55px;top:656.91px;font-size:12.5px;line-height:16px;color:#1a1a1a;font-weight:400;transform:scaleX(1.0000);">37</div>
<div class="t" style="left:65.00px;top:453.69px;font-size:11px;line-height:14px;color:#000;font-weight:700;transform:scaleX(0.9764);">FECHA</div>
<div class="t" style="left:163.70px;top:445.09px;font-size:11px;line-height:14px;color:#000;font-weight:700;transform:scaleX(1.0774);">Nº DE C</div>
<div class="t" style="left:146.00px;top:461.09px;font-size:11px;line-height:14px;color:#000;font-weight:700;transform:scaleX(0.9994);">OMPROBANTE</div>
<div class="t" style="left:279.30px;top:445.09px;font-size:11px;line-height:14px;color:#000;font-weight:700;transform:scaleX(1.0783);">Nº RUC</div>
<div class="t" style="left:265.60px;top:461.09px;font-size:11px;line-height:14px;color:#000;font-weight:700;transform:scaleX(1.0869);">PROVEEDOR</div>
<div class="t" style="left:371.00px;top:445.09px;font-size:11px;line-height:14px;color:#000;font-weight:700;transform:scaleX(1.0095);">TIPO</div>
<div class="t" style="left:353.80px;top:461.09px;font-size:11px;line-height:14px;color:#000;font-weight:700;transform:scaleX(1.1175);">COMPROB</div>
<div class="t" style="left:454.20px;top:453.29px;font-size:11px;line-height:14px;color:#000;font-weight:700;transform:scaleX(1.0223);">AUTORIZACIÓN</div>
<div class="t" style="left:610.80px;top:453.29px;font-size:11px;line-height:14px;color:#000;font-weight:700;transform:scaleX(0.9575);">PROVEEDOR</div>
<div class="t" style="left:720.00px;top:453.29px;font-size:11px;line-height:14px;color:#000;font-weight:700;transform:scaleX(1.0246);">BASE 12%</div>
<div class="t" style="left:791.60px;top:453.29px;font-size:11px;line-height:14px;color:#000;font-weight:700;transform:scaleX(0.9772);">BASE 0%</div>
<div class="t" style="left:872.00px;top:453.29px;font-size:11px;line-height:14px;color:#000;font-weight:700;transform:scaleX(1.0561);">IVA</div>
<div class="t" style="left:923.00px;top:444.09px;font-size:11px;line-height:14px;color:#000;font-weight:700;transform:scaleX(1.0042);">SUBTO-TAL</div>
<div class="t" style="left:945.00px;top:478.09px;font-size:11px;line-height:14px;color:#000;font-weight:700;transform:scaleX(1.0795);">332</div>
<div class="t" style="left:1021.00px;top:453.29px;font-size:11px;line-height:14px;color:#000;font-weight:700;transform:scaleX(0.9933);">TOTAL</div>
<div class="t" style="left:1115.00px;top:445.09px;font-size:11px;line-height:14px;color:#000;font-weight:700;transform:scaleX(1.0031);">Nº</div>
<div class="t" style="left:1088.70px;top:461.59px;font-size:11px;line-height:14px;color:#000;font-weight:700;transform:scaleX(1.0850);">RETENCION</div>
<div class="t" style="left:1194.50px;top:443.09px;font-size:11px;line-height:14px;color:#000;font-weight:700;transform:scaleX(1.0450);">RETENCION IVA</div>
<div class="t" style="left:1186.00px;top:478.09px;font-size:11px;line-height:14px;color:#000;font-weight:700;transform:scaleX(0.9897);">30%</div>
<div class="t" style="left:1232.40px;top:478.09px;font-size:11px;line-height:14px;color:#000;font-weight:700;transform:scaleX(1.0078);">70%</div>
<div class="t" style="left:1285.30px;top:478.09px;font-size:11px;line-height:14px;color:#000;font-weight:700;transform:scaleX(1.0557);">100%</div>
<div class="t" style="left:1328.00px;top:443.09px;font-size:11px;line-height:14px;color:#000;font-weight:700;transform:scaleX(1.0909);">RET</div>
<svg class="s" style="left:30px;top:456px" width="17" height="17"><defs><linearGradient id="fb30" x1="0" y1="0" x2="0" y2="1"><stop offset="0" stop-color="#fdfdfe"/><stop offset="1" stop-color="#eceef2"/></linearGradient></defs><rect x="0.5" y="0.5" width="16" height="16" fill="url(#fb30)" stroke="#b3b8c1"/><path d="M4.5 7 h8 l-4 4z" fill="#6b6b6b"/></svg>
<svg class="s" style="left:103px;top:456px" width="17" height="17"><defs><linearGradient id="fb103" x1="0" y1="0" x2="0" y2="1"><stop offset="0" stop-color="#fdfdfe"/><stop offset="1" stop-color="#eceef2"/></linearGradient></defs><rect x="0.5" y="0.5" width="16" height="16" fill="url(#fb103)" stroke="#b3b8c1"/><path d="M4.5 7 h8 l-4 4z" fill="#6b6b6b"/></svg>
<svg class="s" style="left:234px;top:456px" width="17" height="17"><defs><linearGradient id="fb234" x1="0" y1="0" x2="0" y2="1"><stop offset="0" stop-color="#fdfdfe"/><stop offset="1" stop-color="#eceef2"/></linearGradient></defs><rect x="0.5" y="0.5" width="16" height="16" fill="url(#fb234)" stroke="#b3b8c1"/><path d="M4.5 7 h8 l-4 4z" fill="#6b6b6b"/></svg>
<svg class="s" style="left:330px;top:456px" width="17" height="17"><defs><linearGradient id="fb330" x1="0" y1="0" x2="0" y2="1"><stop offset="0" stop-color="#fdfdfe"/><stop offset="1" stop-color="#eceef2"/></linearGradient></defs><rect x="0.5" y="0.5" width="16" height="16" fill="url(#fb330)" stroke="#b3b8c1"/><path d="M4.5 7 h8 l-4 4z" fill="#6b6b6b"/></svg>
<svg class="s" style="left:403px;top:456px" width="17" height="17"><defs><linearGradient id="fb403" x1="0" y1="0" x2="0" y2="1"><stop offset="0" stop-color="#fdfdfe"/><stop offset="1" stop-color="#eceef2"/></linearGradient></defs><rect x="0.5" y="0.5" width="16" height="16" fill="url(#fb403)" stroke="#b3b8c1"/><path d="M4.5 7 h8 l-4 4z" fill="#6b6b6b"/></svg>
<svg class="s" style="left:559px;top:456px" width="17" height="17"><defs><linearGradient id="fb559" x1="0" y1="0" x2="0" y2="1"><stop offset="0" stop-color="#fdfdfe"/><stop offset="1" stop-color="#eceef2"/></linearGradient></defs><rect x="0.5" y="0.5" width="16" height="16" fill="url(#fb559)" stroke="#b3b8c1"/><path d="M4.5 7 h8 l-4 4z" fill="#6b6b6b"/></svg>
<svg class="s" style="left:696px;top:456px" width="17" height="17"><defs><linearGradient id="fb696" x1="0" y1="0" x2="0" y2="1"><stop offset="0" stop-color="#fdfdfe"/><stop offset="1" stop-color="#eceef2"/></linearGradient></defs><rect x="0.5" y="0.5" width="16" height="16" fill="url(#fb696)" stroke="#b3b8c1"/><path d="M4.5 7 h8 l-4 4z" fill="#6b6b6b"/></svg>
<svg class="s" style="left:763px;top:456px" width="17" height="17"><defs><linearGradient id="fb763" x1="0" y1="0" x2="0" y2="1"><stop offset="0" stop-color="#fdfdfe"/><stop offset="1" stop-color="#eceef2"/></linearGradient></defs><rect x="0.5" y="0.5" width="16" height="16" fill="url(#fb763)" stroke="#b3b8c1"/><path d="M4.5 7 h8 l-4 4z" fill="#6b6b6b"/></svg>
<svg class="s" style="left:832px;top:456px" width="17" height="17"><defs><linearGradient id="fb832" x1="0" y1="0" x2="0" y2="1"><stop offset="0" stop-color="#fdfdfe"/><stop offset="1" stop-color="#eceef2"/></linearGradient></defs><rect x="0.5" y="0.5" width="16" height="16" fill="url(#fb832)" stroke="#b3b8c1"/><path d="M4.5 7 h8 l-4 4z" fill="#6b6b6b"/></svg>
<svg class="s" style="left:896px;top:456px" width="17" height="17"><defs><linearGradient id="fb896" x1="0" y1="0" x2="0" y2="1"><stop offset="0" stop-color="#fdfdfe"/><stop offset="1" stop-color="#eceef2"/></linearGradient></defs><rect x="0.5" y="0.5" width="16" height="16" fill="url(#fb896)" stroke="#b3b8c1"/><path d="M4.5 7 h8 l-4 4z" fill="#6b6b6b"/></svg>
<svg class="s" style="left:978px;top:456px" width="17" height="17"><defs><linearGradient id="fb978" x1="0" y1="0" x2="0" y2="1"><stop offset="0" stop-color="#fdfdfe"/><stop offset="1" stop-color="#eceef2"/></linearGradient></defs><rect x="0.5" y="0.5" width="16" height="16" fill="url(#fb978)" stroke="#b3b8c1"/><path d="M4.5 7 h8 l-4 4z" fill="#6b6b6b"/></svg>
<svg class="s" style="left:1064px;top:456px" width="17" height="17"><defs><linearGradient id="fb1064" x1="0" y1="0" x2="0" y2="1"><stop offset="0" stop-color="#fdfdfe"/><stop offset="1" stop-color="#eceef2"/></linearGradient></defs><rect x="0.5" y="0.5" width="16" height="16" fill="url(#fb1064)" stroke="#b3b8c1"/><path d="M4.5 7 h8 l-4 4z" fill="#6b6b6b"/></svg>
<svg class="s" style="left:1143px;top:456px" width="17" height="17"><defs><linearGradient id="fb1143" x1="0" y1="0" x2="0" y2="1"><stop offset="0" stop-color="#fdfdfe"/><stop offset="1" stop-color="#eceef2"/></linearGradient></defs><rect x="0.5" y="0.5" width="16" height="16" fill="url(#fb1143)" stroke="#b3b8c1"/><path d="M4.5 7 h8 l-4 4z" fill="#6b6b6b"/></svg>
<svg class="s" style="left:1300px;top:456px" width="17" height="17"><defs><linearGradient id="fb1300" x1="0" y1="0" x2="0" y2="1"><stop offset="0" stop-color="#fdfdfe"/><stop offset="1" stop-color="#eceef2"/></linearGradient></defs><rect x="0.5" y="0.5" width="16" height="16" fill="url(#fb1300)" stroke="#b3b8c1"/><path d="M4.5 7 h8 l-4 4z" fill="#6b6b6b"/></svg>
<div class="r" style="left:1339px;top:426px;width:1px;height:68px;background:#fff;"></div>
<div class="t" style="left:1017.61px;top:315.09px;font-size:11px;line-height:14px;color:#000;font-weight:700;transform:scaleX(1.0000);">Botellas</div>
<div class="t" style="left:1005.99px;top:332.29px;font-size:11px;line-height:14px;color:#000;font-weight:700;transform:scaleX(1.0000);">plásticas 1%</div>
<div class="t" style="left:1089.63px;top:264.29px;font-size:11px;line-height:14px;color:#000;font-weight:700;transform:scaleX(1.0000);">Actividades</div>
<div class="t" style="left:1114.08px;top:281.29px;font-size:11px;line-height:14px;color:#000;font-weight:700;transform:scaleX(1.0000);">de</div>
<div class="t" style="left:1085.96px;top:298.29px;font-size:11px;line-height:14px;color:#000;font-weight:700;transform:scaleX(1.0000);">construcción</div>
<div class="t" style="left:1100.60px;top:315.29px;font-size:11px;line-height:14px;color:#000;font-weight:700;transform:scaleX(1.0000);">de obra</div>
<div class="t" style="left:1096.34px;top:332.29px;font-size:11px;line-height:14px;color:#000;font-weight:700;transform:scaleX(1.0000);">materias,</div>
<div class="t" style="left:1094.83px;top:349.29px;font-size:11px;line-height:14px;color:#000;font-weight:700;transform:scaleX(1.0000);">inmueble,</div>
<div class="t" style="left:1086.58px;top:366.29px;font-size:11px;line-height:14px;color:#000;font-weight:700;transform:scaleX(1.0000);">urbanización</div>
<div class="t" style="left:1104.91px;top:383.29px;font-size:11px;line-height:14px;color:#000;font-weight:700;transform:scaleX(1.0000);">1,75%</div>
<div class="t" style="left:1164.53px;top:298.09px;font-size:11px;line-height:14px;color:#000;font-weight:700;transform:scaleX(1.0000);">Cuando</div>
<div class="t" style="left:1167.28px;top:315.09px;font-size:11px;line-height:14px;color:#000;font-weight:700;transform:scaleX(1.0000);">no hay</div>
<div class="t" style="left:1163.61px;top:332.09px;font-size:11px;line-height:14px;color:#000;font-weight:700;transform:scaleX(1.0000);">retenció</div>
<div class="t" style="left:1181.64px;top:349.09px;font-size:11px;line-height:14px;color:#000;font-weight:700;transform:scaleX(1.0000);">n</div>
<div class="t" style="left:1213.82px;top:281.09px;font-size:11px;line-height:14px;color:#000;font-weight:700;transform:scaleX(1.0000);">100 % y</div>
<div class="t" style="left:1222.70px;top:298.09px;font-size:11px;line-height:14px;color:#000;font-weight:700;transform:scaleX(1.0000);">1%.-</div>
<div class="t" style="left:1214.13px;top:315.09px;font-size:11px;line-height:14px;color:#000;font-weight:700;transform:scaleX(1.0000);">Regime</div>
<div class="t" style="left:1230.64px;top:332.09px;font-size:11px;line-height:14px;color:#000;font-weight:700;transform:scaleX(1.0000);">n</div>
<div class="t" style="left:1215.96px;top:349.09px;font-size:11px;line-height:14px;color:#000;font-weight:700;transform:scaleX(1.0000);">microe</div>
<div class="t" style="left:1214.39px;top:366.09px;font-size:11px;line-height:14px;color:#000;font-weight:700;transform:scaleX(1.0000);">mpresa</div>
<div class="t" style="left:1259.80px;top:292.09px;font-size:11px;line-height:14px;color:#000;font-weight:700;transform:scaleX(1.0000);">Productos</div>
<div class="t" style="left:1261.32px;top:308.19px;font-size:11px;line-height:14px;color:#000;font-weight:700;transform:scaleX(1.0000);">agricoilas</div>
<div class="t" style="left:1283.64px;top:324.29px;font-size:11px;line-height:14px;color:#000;font-weight:700;transform:scaleX(1.0000);">o</div>
<div class="t" style="left:1260.71px;top:340.39px;font-size:11px;line-height:14px;color:#000;font-weight:700;transform:scaleX(1.0000);">Pecuarios</div>
<div class="t" style="left:1279.05px;top:356.49px;font-size:11px;line-height:14px;color:#000;font-weight:700;transform:scaleX(1.0000);">1%</div>
<div class="t" style="left:1323.30px;top:281.49px;font-size:11px;line-height:14px;color:#000;font-weight:700;transform:scaleX(1.0000);">Transporte</div>
<div class="t" style="left:1326.40px;top:298.69px;font-size:11px;line-height:14px;color:#000;font-weight:700;transform:scaleX(1.0000);">entre</div>
<div class="t" style="left:1335.80px;top:315.59px;font-size:11px;line-height:14px;color:#000;font-weight:700;transform:scaleX(1.0000);">de</div>
<div class="t" style="left:1324.80px;top:332.59px;font-size:11px;line-height:14px;color:#000;font-weight:700;transform:scaleX(1.0000);">bienes</div>
<div class="t" style="left:1319.70px;top:349.79px;font-size:11px;line-height:14px;color:#000;font-weight:700;transform:scaleX(1.0000);">muebles</div>
<div class="t" style="left:1328.40px;top:366.09px;font-size:11px;line-height:14px;color:#000;font-weight:700;transform:scaleX(1.0000);">1,75%</div>
<div class="t" style="left:1022.60px;top:409.60px;font-size:11.5px;line-height:14px;color:#000;font-weight:700;transform:scaleX(1.1061);">343C</div>
<div class="t" style="left:1107.00px;top:409.60px;font-size:11.5px;line-height:14px;color:#000;font-weight:700;transform:scaleX(0.9824);">343B</div>
<div class="t" style="left:1175.00px;top:409.60px;font-size:11.5px;line-height:14px;color:#000;font-weight:700;transform:scaleX(1.0221);">332</div>
<div class="t" style="left:1224.00px;top:409.60px;font-size:11.5px;line-height:14px;color:#000;font-weight:700;transform:scaleX(1.0430);">343</div>
<div class="t" style="left:1271.50px;top:409.60px;font-size:11.5px;line-height:14px;color:#000;font-weight:700;transform:scaleX(1.1388);">312A</div>
<div class="t" style="left:1333.00px;top:409.60px;font-size:11.5px;line-height:14px;color:#000;font-weight:700;transform:scaleX(1.0430);">343</div>
<div class="t" style="left:815.00px;top:409.60px;font-size:11.5px;line-height:14px;color:#000;font-weight:700;transform:scaleX(1.0601);">TOTAL 332</div>
<div class="t" style="left:947.80px;top:409.60px;font-size:11.5px;line-height:14px;color:#000;font-weight:700;transform:scaleX(1.0632);">5355.00</div>
<div class="t" style="left:611.00px;top:315.80px;font-size:11.5px;line-height:14px;color:#000;font-weight:700;transform:scaleX(1.0752);">REGISTRO DE FACTURAS DE COMPRA Y RETENCIONES A</div>
<div class="t" style="left:685.40px;top:332.60px;font-size:11.5px;line-height:14px;color:#000;font-weight:700;transform:scaleX(1.0225);">PROVEEDORES DE FEBRERO 2023</div>
<div class="r" style="left:1339px;top:256px;width:21px;height:239px;background:#fff;"></div>
<div class="t" style="left:31.00px;top:505.10px;font-size:11.3px;line-height:14px;color:#111;font-weight:400;transform:scaleX(1.1455);">26</div>
<div class="t" style="left:59.50px;top:505.10px;font-size:11.3px;line-height:14px;color:#111;font-weight:400;transform:scaleX(1.1634);">27/2/2023</div>
<div class="t" style="left:123.50px;top:505.10px;font-size:11.3px;line-height:14px;color:#111;font-weight:400;transform:scaleX(1.0561);">001</div>
<div class="t" style="left:152.00px;top:505.10px;font-size:11.3px;line-height:14px;color:#111;font-weight:400;transform:scaleX(1.1145);">002</div>
<div class="t" style="left:181.00px;top:505.10px;font-size:11.3px;line-height:14px;color:#111;font-weight:400;transform:scaleX(1.1051);">000000008</div>
<div class="t" style="left:254.40px;top:505.10px;font-size:11.3px;line-height:14px;color:#111;font-weight:400;transform:scaleX(1.0943);">1754929451001</div>
<div class="t" style="left:350.60px;top:505.10px;font-size:11.3px;line-height:14px;color:#111;font-weight:400;transform:scaleX(0.9371);">NOTA VEN.</div>
<div class="t" style="left:423.50px;top:505.10px;font-size:11.3px;line-height:14px;color:#111;font-weight:400;transform:scaleX(1.1160);">1130924528</div>
<div class="t" style="left:579.50px;top:497.99px;font-size:10.5px;line-height:13px;color:#111;font-weight:400;transform:scaleX(1.0376);">AMAGUAÑA OLAYA</div>
<div class="t" style="left:579.50px;top:514.79px;font-size:10.5px;line-height:13px;color:#111;font-weight:400;transform:scaleX(0.9572);">EVELYN VERONICA</div>
<div class="t" style="left:800.20px;top:505.10px;font-size:11.3px;line-height:14px;color:#111;font-weight:400;transform:scaleX(1.0821);">27.66</div>
<div class="t" style="left:939.30px;top:505.10px;font-size:11.3px;line-height:14px;color:#111;font-weight:400;transform:scaleX(1.0856);">27.66</div>
<div class="t" style="left:1024.00px;top:505.10px;font-size:11.3px;line-height:14px;color:#111;font-weight:400;transform:scaleX(1.0397);">27.66</div>
<div class="t" style="left:869.70px;top:505.10px;font-size:11.3px;line-height:14px;color:#111;font-weight:400;transform:scaleX(1.0633);">0.00</div>
<div class="t" style="left:1100.20px;top:505.10px;font-size:11.3px;line-height:14px;color:#111;font-weight:400;transform:scaleX(0.8949);">SIN. RET</div>
<div class="t" style="left:1276.20px;top:505.10px;font-size:11.3px;line-height:14px;color:#111;font-weight:400;transform:scaleX(1.0497);">0.00</div>
<div class="t" style="left:1333.00px;top:505.10px;font-size:11.3px;line-height:14px;color:#111;font-weight:400;transform:scaleX(1.0364);">3</div>
<svg class="s" style="left:121px;top:496px" width="7" height="7"><path d="M0 0 h6 L0 6z" fill="#008000"/></svg>
<svg class="s" style="left:150px;top:496px" width="7" height="7"><path d="M0 0 h6 L0 6z" fill="#008000"/></svg>
<svg class="s" style="left:179px;top:496px" width="7" height="7"><path d="M0 0 h6 L0 6z" fill="#008000"/></svg>
<svg class="s" style="left:252px;top:496px" width="7" height="7"><path d="M0 0 h6 L0 6z" fill="#008000"/></svg>
<svg class="s" style="left:421px;top:496px" width="7" height="7"><path d="M0 0 h6 L0 6z" fill="#008000"/></svg>
<div class="t" style="left:31.00px;top:547.60px;font-size:11.3px;line-height:14px;color:#111;font-weight:400;transform:scaleX(1.1455);">27</div>
<div class="t" style="left:59.50px;top:547.60px;font-size:11.3px;line-height:14px;color:#111;font-weight:400;transform:scaleX(1.1634);">27/2/2023</div>
<div class="t" style="left:123.50px;top:547.60px;font-size:11.3px;line-height:14px;color:#111;font-weight:400;transform:scaleX(1.0561);">001</div>
<div class="t" style="left:152.00px;top:547.60px;font-size:11.3px;line-height:14px;color:#111;font-weight:400;transform:scaleX(1.1145);">002</div>
<div class="t" style="left:181.00px;top:547.60px;font-size:11.3px;line-height:14px;color:#111;font-weight:400;transform:scaleX(1.1051);">000000009</div>
<div class="t" style="left:254.40px;top:547.60px;font-size:11.3px;line-height:14px;color:#111;font-weight:400;transform:scaleX(1.0943);">1754929451001</div>
<div class="t" style="left:350.60px;top:547.60px;font-size:11.3px;line-height:14px;color:#111;font-weight:400;transform:scaleX(0.9371);">NOTA VEN.</div>
<div class="t" style="left:423.50px;top:547.60px;font-size:11.3px;line-height:14px;color:#111;font-weight:400;transform:scaleX(1.1160);">1130924528</div>
<div class="t" style="left:579.50px;top:540.09px;font-size:10.5px;line-height:13px;color:#111;font-weight:400;transform:scaleX(1.0376);">AMAGUAÑA OLAYA</div>
<div class="t" style="left:579.50px;top:556.79px;font-size:10.5px;line-height:13px;color:#111;font-weight:400;transform:scaleX(0.9572);">EVELYN VERONICA</div>
<div class="t" style="left:800.20px;top:547.60px;font-size:11.3px;line-height:14px;color:#111;font-weight:400;transform:scaleX(1.0821);">89.60</div>
<div class="t" style="left:939.30px;top:547.60px;font-size:11.3px;line-height:14px;color:#111;font-weight:400;transform:scaleX(1.0856);">89.60</div>
<div class="t" style="left:1024.00px;top:547.60px;font-size:11.3px;line-height:14px;color:#111;font-weight:400;transform:scaleX(1.0397);">89.60</div>
<div class="t" style="left:869.70px;top:547.60px;font-size:11.3px;line-height:14px;color:#111;font-weight:400;transform:scaleX(1.0633);">0.00</div>
<div class="t" style="left:1100.20px;top:547.60px;font-size:11.3px;line-height:14px;color:#111;font-weight:400;transform:scaleX(0.8949);">SIN. RET</div>
<div class="t" style="left:1276.20px;top:547.60px;font-size:11.3px;line-height:14px;color:#111;font-weight:400;transform:scaleX(1.0497);">0.00</div>
<div class="t" style="left:1333.00px;top:547.60px;font-size:11.3px;line-height:14px;color:#111;font-weight:400;transform:scaleX(1.0364);">3</div>
<svg class="s" style="left:121px;top:529px" width="7" height="7"><path d="M0 0 h6 L0 6z" fill="#008000"/></svg>
<svg class="s" style="left:150px;top:529px" width="7" height="7"><path d="M0 0 h6 L0 6z" fill="#008000"/></svg>
<svg class="s" style="left:179px;top:529px" width="7" height="7"><path d="M0 0 h6 L0 6z" fill="#008000"/></svg>
<svg class="s" style="left:252px;top:529px" width="7" height="7"><path d="M0 0 h6 L0 6z" fill="#008000"/></svg>
<svg class="s" style="left:421px;top:529px" width="7" height="7"><path d="M0 0 h6 L0 6z" fill="#008000"/></svg>
<div class="t" style="left:31.00px;top:589.50px;font-size:11.3px;line-height:14px;color:#111;font-weight:400;transform:scaleX(1.1455);">28</div>
<div class="t" style="left:59.50px;top:589.50px;font-size:11.3px;line-height:14px;color:#111;font-weight:400;transform:scaleX(1.1634);">28/2/2023</div>
<div class="t" style="left:123.50px;top:589.50px;font-size:11.3px;line-height:14px;color:#111;font-weight:400;transform:scaleX(1.0561);">001</div>
<div class="t" style="left:152.00px;top:589.50px;font-size:11.3px;line-height:14px;color:#111;font-weight:400;transform:scaleX(1.1145);">002</div>
<div class="t" style="left:181.00px;top:589.50px;font-size:11.3px;line-height:14px;color:#111;font-weight:400;transform:scaleX(1.1051);">000000010</div>
<div class="t" style="left:254.40px;top:589.50px;font-size:11.3px;line-height:14px;color:#111;font-weight:400;transform:scaleX(1.0943);">1754929451001</div>
<div class="t" style="left:350.60px;top:589.50px;font-size:11.3px;line-height:14px;color:#111;font-weight:400;transform:scaleX(0.9371);">NOTA VEN.</div>
<div class="t" style="left:423.50px;top:589.50px;font-size:11.3px;line-height:14px;color:#111;font-weight:400;transform:scaleX(1.1160);">1130924528</div>
<div class="t" style="left:579.50px;top:582.59px;font-size:10.5px;line-height:13px;color:#111;font-weight:400;transform:scaleX(1.0376);">AMAGUAÑA OLAYA</div>
<div class="t" style="left:579.50px;top:599.59px;font-size:10.5px;line-height:13px;color:#111;font-weight:400;transform:scaleX(0.9572);">EVELYN VERONICA</div>
<div class="t" style="left:796.00px;top:589.50px;font-size:11.3px;line-height:14px;color:#111;font-weight:400;transform:scaleX(1.0709);">129.00</div>
<div class="t" style="left:936.00px;top:589.50px;font-size:11.3px;line-height:14px;color:#111;font-weight:400;transform:scaleX(1.0709);">129.00</div>
<div class="t" style="left:1020.00px;top:589.50px;font-size:11.3px;line-height:14px;color:#111;font-weight:400;transform:scaleX(1.0593);">129.00</div>
<div class="t" style="left:869.70px;top:589.50px;font-size:11.3px;line-height:14px;color:#111;font-weight:400;transform:scaleX(1.0633);">0.00</div>
<div class="t" style="left:1100.20px;top:589.50px;font-size:11.3px;line-height:14px;color:#111;font-weight:400;transform:scaleX(0.8949);">SIN. RET</div>
<div class="t" style="left:1276.20px;top:589.50px;font-size:11.3px;line-height:14px;color:#111;font-weight:400;transform:scaleX(1.0497);">0.00</div>
<div class="t" style="left:1333.00px;top:589.50px;font-size:11.3px;line-height:14px;color:#111;font-weight:400;transform:scaleX(1.0364);">3</div>
<svg class="s" style="left:121px;top:580px" width="7" height="7"><path d="M0 0 h6 L0 6z" fill="#008000"/></svg>
<svg class="s" style="left:150px;top:580px" width="7" height="7"><path d="M0 0 h6 L0 6z" fill="#008000"/></svg>
<svg class="s" style="left:179px;top:580px" width="7" height="7"><path d="M0 0 h6 L0 6z" fill="#008000"/></svg>
<svg class="s" style="left:252px;top:580px" width="7" height="7"><path d="M0 0 h6 L0 6z" fill="#008000"/></svg>
<svg class="s" style="left:421px;top:580px" width="7" height="7"><path d="M0 0 h6 L0 6z" fill="#008000"/></svg>
<div class="t" style="left:31.00px;top:616.60px;font-size:11.3px;line-height:14px;color:#111;font-weight:400;transform:scaleX(1.1455);">29</div>
<div class="t" style="left:349.00px;top:616.60px;font-size:11.3px;line-height:14px;color:#111;font-weight:400;transform:scaleX(1.0140);">TIPO COMP.</div>
<div class="t" style="left:870.00px;top:616.60px;font-size:11.3px;line-height:14px;color:#111;font-weight:400;transform:scaleX(1.0906);">0.00</div>
<div class="t" style="left:942.50px;top:616.60px;font-size:11.3px;line-height:14px;color:#111;font-weight:400;transform:scaleX(1.0906);">0.00</div>
<div class="t" style="left:1026.50px;top:616.60px;font-size:11.3px;line-height:14px;color:#111;font-weight:400;transform:scaleX(1.0906);">0.00</div>
<div class="t" style="left:1100.00px;top:616.60px;font-size:11.3px;line-height:14px;color:#111;font-weight:400;transform:scaleX(0.9012);">SIN. RET</div>
<div class="t" style="left:1276.00px;top:616.60px;font-size:11.3px;line-height:14px;color:#111;font-weight:400;transform:scaleX(1.0906);">0.00</div>
<div class="t" style="left:1333.00px;top:616.60px;font-size:11.3px;line-height:14px;color:#111;font-weight:400;transform:scaleX(1.0364);">3</div>
<div class="t" style="left:31.00px;top:636.60px;font-size:11.3px;line-height:14px;color:#111;font-weight:400;transform:scaleX(1.1455);">30</div>
<div class="t" style="left:349.00px;top:636.60px;font-size:11.3px;line-height:14px;color:#111;font-weight:400;transform:scaleX(1.0140);">TIPO COMP.</div>
<div class="t" style="left:870.00px;top:636.60px;font-size:11.3px;line-height:14px;color:#111;font-weight:400;transform:scaleX(1.0906);">0.00</div>
<div class="t" style="left:942.50px;top:636.60px;font-size:11.3px;line-height:14px;color:#111;font-weight:400;transform:scaleX(1.0906);">0.00</div>
<div class="t" style="left:1026.50px;top:636.60px;font-size:11.3px;line-height:14px;color:#111;font-weight:400;transform:scaleX(1.0906);">0.00</div>
<div class="t" style="left:1100.00px;top:636.60px;font-size:11.3px;line-height:14px;color:#111;font-weight:400;transform:scaleX(0.9012);">SIN. RET</div>
<div class="t" style="left:1276.00px;top:636.60px;font-size:11.3px;line-height:14px;color:#111;font-weight:400;transform:scaleX(1.0906);">0.00</div>
<div class="t" style="left:1333.00px;top:636.60px;font-size:11.3px;line-height:14px;color:#111;font-weight:400;transform:scaleX(1.0364);">3</div>
<div class="t" style="left:31.00px;top:656.60px;font-size:11.3px;line-height:14px;color:#111;font-weight:400;transform:scaleX(1.1455);">31</div>
<div class="t" style="left:349.00px;top:656.60px;font-size:11.3px;line-height:14px;color:#111;font-weight:400;transform:scaleX(1.0140);">TIPO COMP.</div>
<div class="t" style="left:870.00px;top:656.60px;font-size:11.3px;line-height:14px;color:#111;font-weight:400;transform:scaleX(1.0906);">0.00</div>
<div class="t" style="left:942.50px;top:656.60px;font-size:11.3px;line-height:14px;color:#111;font-weight:400;transform:scaleX(1.0906);">0.00</div>
<div class="t" style="left:1026.50px;top:656.60px;font-size:11.3px;line-height:14px;color:#111;font-weight:400;transform:scaleX(1.0906);">0.00</div>
<div class="t" style="left:1100.00px;top:656.60px;font-size:11.3px;line-height:14px;color:#111;font-weight:400;transform:scaleX(0.9012);">SIN. RET</div>
<div class="t" style="left:1276.00px;top:656.60px;font-size:11.3px;line-height:14px;color:#111;font-weight:400;transform:scaleX(1.0906);">0.00</div>
<div class="t" style="left:1333.00px;top:656.60px;font-size:11.3px;line-height:14px;color:#111;font-weight:400;transform:scaleX(1.0364);">3</div>
<div class="r" style="left:1339px;top:495px;width:21px;height:183px;background:#fff;"></div>
<div class="r" style="left:575px;top:405px;width:139px;height:22px;background:transparent;border:2px solid #217346;box-sizing:border-box"></div>
<div class="r" style="left:710px;top:423px;width:5px;height:5px;background:#217346;outline:1px solid #fff"></div>
<svg class="s" style="left:0;top:0" width="600" height="430" viewBox="0 0 600 430">
<defs><clipPath id="dome"><rect x="0" y="0" width="600" height="387"/></clipPath>
<linearGradient id="vh" x1="0" y1="0" x2="0" y2="1"><stop offset="0" stop-color="#f15a22"/><stop offset="0.6" stop-color="#e52420"/><stop offset="1" stop-color="#e0141b"/></linearGradient>
<linearGradient id="lf" x1="0" y1="0" x2="1" y2="1"><stop offset="0" stop-color="#f7b21b"/><stop offset="1" stop-color="#e53c1b"/></linearGradient></defs>
<rect x="26" y="257" width="559" height="149" fill="#fff"/>
<path d="M27 261 L93 261 L27 396z" fill="#0b6fb8"/>
<path d="M60.5 261 L79.7 261 L54.6 314.7 L34.8 314.7z" fill="#f6e51f"/>
<path d="M280 261 L585 261 L585 406.5 L209.5 406.5z" fill="#038b2f"/>
<path d="M289 261 L337 261 L260 423.5 L209.5 423.5z" fill="#dfe000"/>
<path d="M555 348.4 L568 348.4 L542.7 405 L529 405z" fill="#fde900"/>
<path d="M570 348.4 L583 348.4 L557.5 405 L544 405z" fill="#fff"/>
<path d="M585 354 L585 376 L571 405 L558.7 405z" fill="#9bbd1c"/>
<g clip-path="url(#dome)">
<path d="M68 387 L68 360.3 A69 72 0 0 1 206 360.3 L206 387z" fill="#0f70ba"/>
<path d="M66 378 C78 360 95 342 112.5 329.5 L125 337 L139 330 L151 336 L159.6 331.4 C178 342 196 356 206 374 L206 387 L66 387z" fill="#2e9c35"/>
<path d="M124 337.5 L139 330 L152 336.5 L141 346z" fill="#f3b417"/>
<path d="M115 330 C128 334 127 340 117 347 C110 352 122 357 138 361 C152 365 158 371 150 378 C142 384 136 386 134 387" fill="none" stroke="#fff" stroke-width="3.4"/>
<path d="M115 330 C128 334 127 340 117 347 C110 352 122 357 138 361 C152 365 158 371 150 378 C142 384 136 386 134 387" fill="none" stroke="#f1b616" stroke-width="2"/>
<path d="M120 352 C135 356 160 358 168 366 C176 374 186 380 194 387 L137 387 C145 381 156 375 150 367 C142 360 126 358 120 352z" fill="#4a9de0"/>
<g stroke="#d8ecfb" stroke-width="0.6" opacity="0.8"><path d="M140 382 l30 -2 M150 376 l25 -1 M160 370 l10 0 M145 385 l40 -1"/></g>
<g transform="translate(132,317)"><g fill="#f7a21b">
<rect x="-2.6" y="-11.5" width="5.2" height="7" /><rect x="-2.6" y="4.5" width="5.2" height="7"/><rect x="-11.5" y="-2.6" width="7" height="5.2"/><rect x="4.5" y="-2.6" width="7" height="5.2"/>
<g transform="rotate(45)"><rect x="-2.6" y="-11.5" width="5.2" height="7"/><rect x="-2.6" y="4.5" width="5.2" height="7"/><rect x="-11.5" y="-2.6" width="7" height="5.2"/><rect x="4.5" y="-2.6" width="7" height="5.2"/></g>
</g><circle r="6" fill="#f7a21b"/><circle r="5" fill="#f5ec12"/><circle r="3" fill="#0f70ba"/></g>
<path d="M79 352 C86 350 92 355 93 364 C86 366 79 362 78 352z" fill="#5a9a3c" stroke="#fff" stroke-width="0.7"/>
<path d="M84 337 C86 345 90 356 97 362 C99 352 94 342 84 337z" fill="url(#lf)"/>
<path d="M90 330 C89 342 92 355 97 362 C102 352 99 340 90 330z" fill="url(#lf)" stroke="#fff" stroke-width="0.5"/>
<ellipse cx="102" cy="346" rx="6.3" ry="10" fill="#f3a51c" stroke="#fff" stroke-width="0.6"/>
<path d="M102 337 L96 325 L101 330 L102 321 L104 330 L109 324 L104 337z" fill="#4e9a3a" stroke="#fff" stroke-width="0.4"/>
<path d="M178 361 L178 338" stroke="#3a8a45" stroke-width="3"/>
<g fill="#b9dab5">
<ellipse cx="176" cy="320" rx="3.5" ry="4.5"/>
<ellipse cx="168" cy="326" rx="6.5" ry="4.5" transform="rotate(25 168 326)"/>
<ellipse cx="185.5" cy="327.5" rx="4.5" ry="4.5"/>
<ellipse cx="166.5" cy="339.5" rx="6.5" ry="6"/>
<ellipse cx="187" cy="345.5" rx="5" ry="5.5"/>
<ellipse cx="178" cy="332" rx="4" ry="6"/>
</g>
<g fill="none" stroke="#3d9a55" stroke-width="1.1">
<path d="M178 340 C176 330 176 324 176 318 M178 338 C172 332 168 326 164 324 M178 338 C182 332 184 328 188 325 M177 342 C172 340 166 338 162 340 M179 343 C184 344 188 346 190 349"/>
</g>
<path d="M68 387 C88 362 112 346 140 345 C168 345 192 362 204 387" fill="none" stroke="#8a4417" stroke-width="3"/>
<path d="M80 387 C92 376 98 372 104 369" fill="none" stroke="#8a4417" stroke-width="2.4"/>
<path d="M196 387 C188 380 184 376 178 372" fill="none" stroke="#8a4417" stroke-width="2.4"/>
<rect x="67" y="373.5" width="138" height="3.2" fill="#8a4417"/>
<g stroke="#7a3a14" stroke-width="1">
<path d="M93 374 L98 360 M103 374 L98 360 M108 374 L113 352 M119 374 L113 352 M124 374 L128 347 M134 374 L128 347 M140 374 L140 345 M146 374 L152 347 M156 374 L152 347 M162 374 L167 352 M172 374 L167 352 M177 374 L182 361 M187 374 L182 361"/>
</g>
</g>
<rect x="68" y="387" width="138" height="25" fill="#fff"/>
<text x="69" y="409.5" font-family="Liberation Sans" font-size="27" fill="url(#vh)" stroke="#fff" stroke-width="0.12" textLength="49" lengthAdjust="spacingAndGlyphs">Valle</text>
<text x="125.5" y="409.5" font-family="Liberation Sans" font-size="27" fill="url(#vh)" stroke="#fff" stroke-width="0.12" textLength="13.5" lengthAdjust="spacingAndGlyphs">H</text>
<text x="139" y="409.5" font-family="Liberation Sans" font-size="20" fill="url(#vh)" stroke="#fff" stroke-width="0.2" textLength="66" lengthAdjust="spacingAndGlyphs">ermoso</text>
<text x="139.3" y="398" font-family="Liberation Sans" font-weight="700" font-size="10" fill="#177a35" textLength="65.5" lengthAdjust="spacingAndGlyphs">GAD PARROQUIAL</text>
<g fill="#fff">
<path d="M356 338 c-1 0 -2 1.5 -1.5 4 c1 3 3 5.5 6 6.5 c1.5 0.5 2.5 -0.5 2.5 -1.5 l-2 -1.5 l-1.2 1 c-1.5 -0.8 -2.5 -2 -3 -3.5 l1 -1 z"/>
<path d="M354 360 h10 v8 h-10z M355 361 l4 3.5 4-3.5 M355 367 l3-3 M363 367 l-3-3" stroke="#038b2f" stroke-width="0.8"/>
<path d="M357 381.5 v10 l2.5-2.5 2 3.5 1.5-1 -2-3 h3z"/>
</g>
</svg>
<div class="t" style="left:361.60px;top:283.12px;font-size:14px;line-height:18px;color:#fff;font-weight:400;transform:scaleX(0.8568);-webkit-text-stroke:0.15px #038b2f">Acuerdo Ministerial N° 1359</div>
<div class="t" style="left:361.60px;top:301.32px;font-size:14px;line-height:18px;color:#fff;font-weight:400;transform:scaleX(0.7904);-webkit-text-stroke:0.15px #038b2f">RUC : 1768120600001</div>
<div class="t" style="left:369.60px;top:332.90px;font-size:12.2px;line-height:15px;color:#fff;font-weight:400;transform:scaleX(0.7899);">(02)2773220 / 2773300</div>
<div class="t" style="left:369.60px;top:355.60px;font-size:12.2px;line-height:15px;color:#fff;font-weight:400;transform:scaleX(0.8576);">gadprvallehermoso@hotmail.com</div>
<div class="t" style="left:369.63px;top:377.90px;font-size:12.2px;line-height:15px;color:#fff;font-weight:400;transform:scaleX(0.8705);">www.vallehermoso.gob.ec</div>
<div class="r" style="left:0px;top:678px;width:1360px;height:27px;background:#e6e6e6;"></div>
<div class="r" style="left:26px;top:678px;width:1314px;height:1px;background:#c6c6c6;"></div>
<svg class="s" style="left:20px;top:684px;" width="50" height="16" viewBox="0 0 50 16"><path d="M11 4 l-4 4 4 4z M34 4 l4 4 -4 4z" fill="#bdbdbd"/></svg>
<div class="r" style="left:100px;top:681px;width:1px;height:21px;background:#a8a8a8;"></div>
<div class="r" style="left:103px;top:681px;width:60px;height:22px;background:#ff0000;"></div>
<div class="t" style="left:113.00px;top:683.61px;font-size:12.5px;line-height:16px;color:#fff;font-weight:400;transform:scaleX(0.9115);">EXTRA</div>
<div class="r" style="left:165px;top:681px;width:1px;height:21px;background:#a8a8a8;"></div>
<div class="t" style="left:177.00px;top:683.61px;font-size:12.5px;line-height:16px;color:#444;font-weight:400;transform:scaleX(0.9769);">ENERO 2023</div>
<div class="r" style="left:263px;top:678px;width:112px;height:25px;background:#fff;border-left:1px solid #b0b0b0;border-right:1px solid #b0b0b0;box-sizing:border-box"></div>
<div class="r" style="left:264px;top:701px;width:110px;height:2px;background:#217346;"></div>
<div class="t" style="left:275.00px;top:683.61px;font-size:12.5px;line-height:16px;color:#217346;font-weight:700;transform:scaleX(0.9307);">FEBRERO 2023</div>
<svg class="s" style="left:404px;top:681px;" width="22" height="22" viewBox="0 0 22 22"><circle cx="11" cy="11" r="8.5" fill="none" stroke="#777" stroke-width="1.2"/><path d="M11 6.5 v9 M6.5 11 h9" stroke="#777" stroke-width="1.4"/></svg>
<svg class="s" style="left:814px;top:684px;" width="6" height="16" viewBox="0 0 6 16"><g fill="#999"><rect x="2" y="2" width="2" height="2"/><rect x="2" y="7" width="2" height="2"/><rect x="2" y="12" width="2" height="2"/></g></svg>
<div class="r" style="left:833px;top:684px;width:505px;height:17px;background:#f0f0f0;border:1px solid #c6c6c6;box-sizing:border-box"></div>
<div class="r" style="left:848px;top:685px;width:320px;height:15px;background:#fff;border:1px solid #b9b9b9;box-sizing:border-box"></div>
<svg class="s" style="left:833px;top:684px;" width="505" height="17" viewBox="0 0 505 17"><path d="M11 4.5 v8 l-4-4z M494 4.5 v8 l4-4z" fill="#222"/><rect x="15" y="1" width="1" height="15" fill="#c6c6c6"/><rect x="488" y="1" width="1" height="15" fill="#c6c6c6"/></svg>
<div class="r" style="left:1340px;top:237px;width:20px;height:441px;background:#f0f0f0;"></div>
<div class="r" style="left:1341px;top:238px;width:17px;height:16px;background:#fff;border:1px solid #b9b9b9;box-sizing:border-box"></div>
<div class="r" style="left:1341px;top:437px;width:17px;height:65px;background:#fff;border:1px solid #b9b9b9;box-sizing:border-box"></div>
<div class="r" style="left:1341px;top:661px;width:17px;height:16px;background:#fff;border:1px solid #b9b9b9;box-sizing:border-box"></div>
<svg class="s" style="left:1341px;top:238px;" width="17" height="440" viewBox="0 0 17 440"><path d="M4.5 10 h8 l-4-4.5z M4.5 429 h8 l-4 4.5z" fill="#222"/></svg>
<div class="r" style="left:0px;top:705px;width:1360px;height:23px;background:#f3f3f3;border-top:1px solid #dadada;box-sizing:border-box"></div>
<div class="t" style="left:8.00px;top:709.60px;font-size:12px;line-height:15px;color:#444;font-weight:400;transform:scaleX(0.9073);">Listo</div>
<svg class="s" style="left:72px;top:708px;" width="22" height="18" viewBox="0 0 22 18"><g fill="none" stroke="#555" stroke-width="1.2"><path d="M9 3 a6 6 0 1 0 5 9"/><path d="M10 6 l7 7 M17 6 l-7 7" stroke-width="1.6"/></g></svg>
<div class="t" style="left:94.00px;top:709.60px;font-size:12px;line-height:15px;color:#333;font-weight:400;transform:scaleX(0.9477);">Accesibilidad: es necesario investigar</div>
<div class="r" style="left:1060px;top:706px;width:40px;height:22px;background:#d4d4d4;"></div>
<svg class="s" style="left:1060px;top:706px;" width="300" height="22" viewBox="0 0 300 22">
<g fill="none" stroke="#666"><rect x="13.5" y="5.5" width="13" height="11"/><path d="M13.5 9.5 h13 M13.5 13.5 h13 M17.5 5.5 v11 M22.5 5.5 v11"/>
<rect x="53.5" y="4.5" width="13" height="12"/><path d="M56 7.5 h8 M56 10.5 h8 M56 13.5 h8"/>
<path d="M93.5 16.5 v-12 h13 v12 M93.5 10.5 h6 v-6 M99.5 10.5 v6"/>
</g>
<path d="M126 10.5 h8 M244 10.5 h8 M248 6.5 v8" stroke="#555" stroke-width="1.2"/>
<rect x="139" y="10" width="100" height="1" fill="#777"/><rect x="187" y="6" width="5" height="10" fill="#555"/>
</svg>
<div class="t" style="left:1326.00px;top:709.60px;font-size:12px;line-height:15px;color:#333;font-weight:400;transform:scaleX(0.8472);">100%</div>
<div class="r" style="left:0px;top:728px;width:1360px;height:40px;background:#101010;"></div>
<div class="r" style="left:295px;top:728px;width:48px;height:38px;background:#353535;"></div>
<div class="r" style="left:250px;top:766px;width:40px;height:2px;background:#76b9ed;"></div>
<div class="r" style="left:295px;top:766px;width:48px;height:2px;background:#76b9ed;"></div>
<div class="r" style="left:397px;top:766px;width:40px;height:2px;background:#76b9ed;"></div>
<div class="r" style="left:446px;top:766px;width:40px;height:2px;background:#76b9ed;"></div>
<div class="r" style="left:495px;top:766px;width:40px;height:2px;background:#76b9ed;"></div>
<svg class="s" style="left:0px;top:728px;" width="560" height="40" viewBox="0 0 560 40">
<g fill="#fff"><path d="M16 13 l7-1 v7 h-7z M24 11.8 l9-1.3 v8.5 h-9z M16 20 h7 v7 l-7-1z M24 20 h9 v8.5 l-9-1.3z"/></g>
<g fill="none" stroke="#fff" stroke-width="1.6"><circle cx="74.5" cy="16.5" r="5.5"/><path d="M70.5 20.5 l-6 6"/></g>
<defs><linearGradient id="edg" x1="0" y1="1" x2="1" y2="0"><stop offset="0" stop-color="#0c59b8"/><stop offset="0.45" stop-color="#1b9fe0"/><stop offset="1" stop-color="#6ee36a"/></linearGradient>
<radialGradient id="ffg" cx="0.7" cy="0.2" r="0.9"><stop offset="0" stop-color="#fff44f"/><stop offset="0.45" stop-color="#ff9a26"/><stop offset="0.8" stop-color="#ff3f5a"/><stop offset="1" stop-color="#e31587"/></radialGradient></defs>
<circle cx="122.8" cy="20" r="12.1" fill="url(#edg)"/>
<path d="M111 21 C111 13 119 10 124 12 C118 11 113 16 115 22 C117 29 126 31 133 27 C130 31 126 32 122.8 32 C116 32 111 27 111 21z" fill="#1070d0"/>
<path d="M117 22 C117 16 122 14 125 16 C128 18 127 22 124 22 C123 25 128 27 134 24.5 C132 29 126 31 122 29.5 C119 28 117 25 117 22z" fill="#0d4f9e"/>
<circle cx="122.8" cy="19.6" r="2.6" fill="#111"/>
<circle cx="172" cy="20" r="12" fill="#db4437"/><path d="M172 20 L183.5 16.5 A12 12 0 0 1 166 30.4z" fill="#f4b400"/><path d="M172 20 L166 30.4 A12 12 0 0 1 161.6 14z" fill="#0f9d58"/><circle cx="172" cy="20" r="5.6" fill="#fff"/><circle cx="172" cy="20" r="4.3" fill="#4285f4"/>
<rect x="215" y="9" width="18" height="6" fill="#41a5ee"/><rect x="215" y="15" width="18" height="5" fill="#2b7cd3"/><rect x="215" y="20" width="18" height="5" fill="#185abd"/><rect x="215" y="25" width="18" height="5" fill="#103f91"/>
<rect x="209" y="14" width="12.7" height="12" rx="0.6" fill="#185abd"/><text x="210" y="24" font-size="10" font-weight="700" fill="#fff">W</text>
<path d="M259 11 h10 l2 1.5 h9.5 v17.3 h-21.5z" fill="#fcd462"/><path d="M259 11 h10 l1.5 2.6 h-11.5z" fill="#e8a318"/>
<path d="M263 29 v-7 h14 v7 h-3.5 v-4 h-7 v4z" fill="#3c96e0"/>
<rect x="313" y="9" width="18" height="6" fill="#33c481"/><rect x="313" y="15" width="18" height="5" fill="#21a366"/><rect x="313" y="20" width="18" height="5" fill="#107c41"/><rect x="313" y="25" width="18" height="5" fill="#185c37"/>
<rect x="313" y="9" width="9" height="21" fill="#000" opacity="0.12"/>
<rect x="306.9" y="14" width="12.1" height="12.1" rx="0.8" fill="#107c41"/><text x="309.2" y="24" font-size="10.5" font-weight="700" fill="#fff">X</text>
<circle cx="368" cy="21.3" r="11.2" fill="url(#ffg)"/>
<path d="M371 8 C376 11 380 16 379.5 21 L372 17z" fill="#ffd43a"/>
<path d="M357 16 L359 10 L361 14 L363 11 L364 15z" fill="#ff9a26"/>
<circle cx="367.6" cy="20" r="5.8" fill="#7542e5"/>
<path d="M361 17 C364 12 371 12 374 16 C370 14 365 15 363 19z" fill="#ff8a1f"/>
<circle cx="417" cy="20" r="11.5" fill="#1ed760"/><g fill="none" stroke="#111" stroke-width="2" stroke-linecap="round"><path d="M410.5 16 c5-1.5 9-1 13 1"/><path d="M411 19.5 c4-1 8-0.8 11.5 0.8"/><path d="M411.5 23 c3.5-0.8 7-0.6 10 0.6"/></g>
<circle cx="466" cy="20" r="12" fill="#db4437"/><path d="M466 20 L477.5 16.5 A12 12 0 0 1 460 30.4z" fill="#f4b400"/><path d="M466 20 L460 30.4 A12 12 0 0 1 455.6 14z" fill="#0f9d58"/><circle cx="466" cy="20" r="5.6" fill="#fff"/><circle cx="466" cy="20" r="4.3" fill="#4285f4"/>
<circle cx="472" cy="26" r="7" fill="#9a9aa0"/><circle cx="472" cy="26" r="4" fill="#e8e8ee"/>
<path d="M504 22 c0-8 10-11 18-9 c6 2 5 7 0 8 c-3 0.5-3 3-1 5 c1 3-5 5-12 3 c-4-1-5-4-5-7z" fill="#cde4f5"/><circle cx="511" cy="17.5" r="1.8" fill="#62b456"/><circle cx="517" cy="15.5" r="1.8" fill="#f2b42a"/><circle cx="508" cy="23" r="1.8" fill="#e03a3a"/><path d="M518 34 l8-20" stroke="#e88a26" stroke-width="2.4"/><path d="M524 14 l3-6 3 2z" fill="#d9b56a"/>
</svg>
<svg class="s" style="left:1100px;top:728px;" width="260" height="40" viewBox="0 0 260 40">
<g fill="none" stroke="#fff" stroke-width="1.3">
<path d="M17.5 23 l6-6 6 6"/>
<rect x="43.5" y="14.5" width="8" height="10" rx="1"/><path d="M51.5 17.5 l2-1.5 v7 l-2-1.5 M44 11 q4-2 8 0 M44 28 q4 2 8 0"/>
<rect x="67.5" y="12.5" width="11" height="9"/><path d="M63.5 15.5 v12 h5 M72 21.5 v4 M67 26.5 h10"/><rect x="63" y="12" width="5" height="4" fill="#fff" stroke="none"/>
<path d="M88 16.5 h3 l4-4 v15 l-4-4 h-3z"/><path d="M97.5 16 q2 4 0 8 M100 14 q3 6 0 12 M102.5 12 q4 8 0 16"/>
<path d="M219.5 12.5 h16 v11 h-6 l-2 2.5 -2-2.5 h-6z"/>
</g>
</svg>
<div class="t" style="left:1215.00px;top:739.91px;font-size:12.5px;line-height:16px;color:#fff;font-weight:400;transform:scaleX(0.7400);">ESP</div>
<div class="t" style="left:1262.00px;top:731.11px;font-size:12.5px;line-height:16px;color:#fff;font-weight:400;transform:scaleX(0.8568);">11:56</div>
<div class="t" style="left:1250.00px;top:748.91px;font-size:12.5px;line-height:16px;color:#fff;font-weight:400;transform:scaleX(0.9169);">13/3/2023</div>
<div class="r" style="left:1355px;top:728px;width:1px;height:40px;background:#555;"></div>
</body></html>
